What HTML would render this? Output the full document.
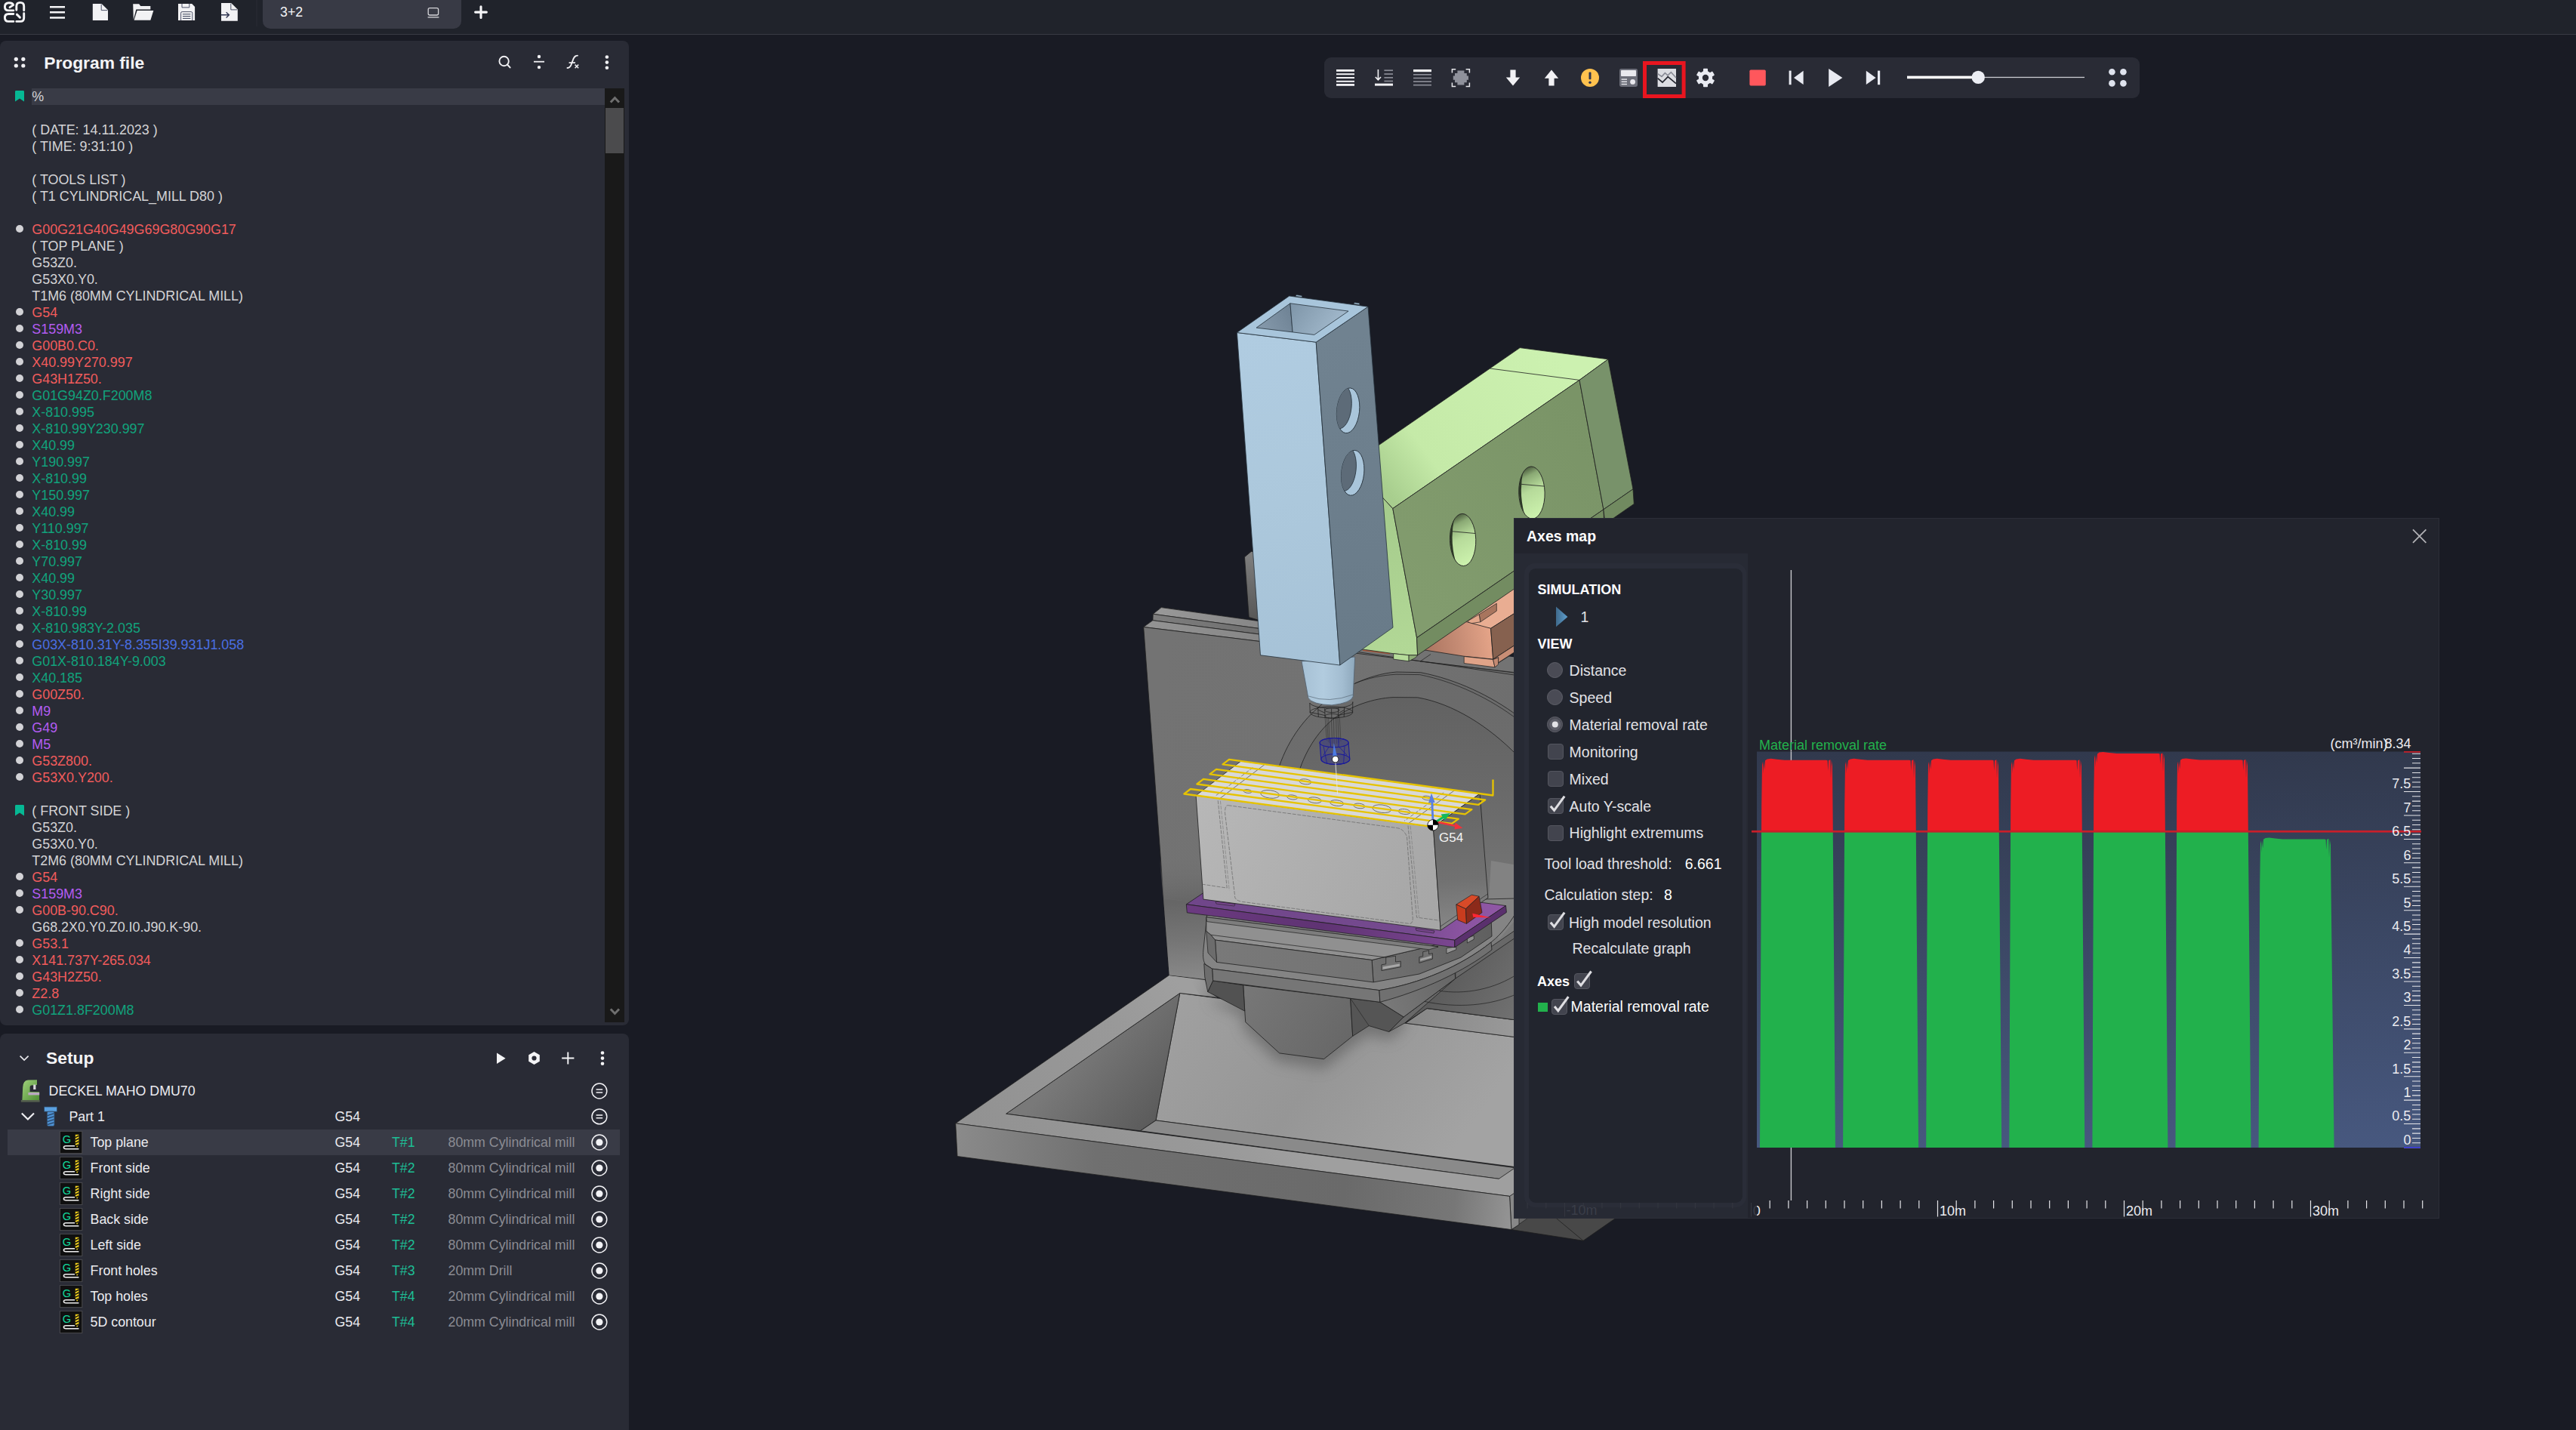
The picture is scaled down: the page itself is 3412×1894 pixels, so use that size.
<!DOCTYPE html>
<html><head><meta charset="utf-8"><title>CAM</title>
<style>
*{box-sizing:border-box;margin:0;padding:0}
html,body{width:3412px;height:1894px;overflow:hidden;background:#191b24}
body{position:relative;font-family:"Liberation Sans",sans-serif;color:#e6e6ea;font-size:18px}
.abs{position:absolute}
#topbar{left:0;top:0;width:3412px;height:45.6px;background:#20232b;border-bottom:1.2px solid #383a44}
#tab{left:348px;top:0;width:263px;height:38px;background:#383a45;border-radius:0 0 10px 10px}
#tab span{position:absolute;left:23px;top:6px;font-size:17.8px;color:#f2f2f5}
#prog{left:0;top:54px;width:833px;height:1304px;background:#292b35;border-radius:8px}
#setup{left:0;top:1369px;width:833px;height:540px;background:#292b35;border-radius:8px 8px 0 0}
.ptitle{position:absolute;font-weight:bold;font-size:22.8px;color:#f4f4f6;white-space:nowrap}
#code{left:0;top:117px;width:800px}
.ln{position:absolute;left:42.3px;height:22px;line-height:22px;font-size:17.9px;white-space:pre;color:#d4d4d6}
.ln.r{color:#f25c5c}.ln.g{color:#11a37c}.ln.p{color:#b35cf2}.ln.b{color:#4a6fe3}
.dot{position:absolute;left:21px;width:10px;height:10px;border-radius:50%;background:#d2d2d6}
#hl{left:42px;top:117px;width:759px;height:22px;background:#393b46}
#sbar{left:801px;top:117px;width:26px;height:1237px;background:#191919}
#sthumb{left:802px;top:143px;width:24px;height:60px;background:#4b4b4d}
.row{position:absolute;left:0;width:833px;height:34px;line-height:34px;font-size:17.8px;white-space:nowrap;color:#ececf0}
.row span{position:absolute;top:0}
.row .t{color:#1dbf95}.row .tool{color:#8b8c93}
#toolbar{left:1754px;top:76px;width:1080px;height:54px;background:#292b35;border-radius:9px}
#axes{left:2006px;top:687px;width:1224px;height:926px;background:#22242d;box-shadow:0 0 0 1px #2c2e38}
.lbl{position:absolute;font-size:19.5px;white-space:nowrap;color:#e2e2e6;line-height:24px}
.hd{position:absolute;font-size:18px;font-weight:bold;white-space:nowrap;color:#ffffff;line-height:24px}
.cb{position:absolute;width:21px;height:21px;border-radius:4px;background:#42444e;border:1.5px solid #54565f}
.rb{position:absolute;width:21px;height:21px;border-radius:50%;background:#4a4b55;border:1.5px solid #5f6069}
</style></head><body>
<div id="topbar" class="abs"></div>
<div id="tab" class="abs"><span>3+2</span></div>
<svg class="abs" style="left:0;top:0" width="700" height="46" viewBox="0 0 700 46">
 <!-- logo -->
 <g fill="none" stroke="#f4f4f6" stroke-width="2.9" stroke-linecap="round" stroke-linejoin="round">
  <path d="M17.8 13.9 L11.2 13.9 Q6.4 13.9 6.4 9 Q6.4 3.7 11.9 3.7 Q16.9 3.7 17.6 6.6 L13 9.6"/>
  <path d="M21.8 13.2 L21.8 8.2 Q21.8 3.4 26.8 3.4 Q31.7 3.4 31.7 8.2 L31.7 13.8"/>
  <path d="M17.8 18.5 L11.2 18.5 Q6.4 18.5 6.4 23.5 Q6.4 28.4 11.2 28.4 L17.8 28.4"/>
  <path d="M21.8 28.4 L27 28.4 Q31.7 28.4 31.7 23.7 L31.7 17.8"/>
  <path d="M22.4 19.1 L26.4 23.1"/>
 </g>
 <!-- hamburger -->
 <g fill="#f4f4f6"><rect x="66" y="8" width="20" height="2.5"/><rect x="66" y="15" width="20" height="2.5"/><rect x="66" y="22.2" width="20" height="2.5"/></g>
 <!-- new file -->
 <path d="M122.8 5 L134.6 5 L143 13.2 L143 27 L122.8 27 Z" fill="#f2f2f4"/>
 <path d="M134.2 5.6 L134.2 13.6 L142.4 13.6" fill="none" stroke="#3a4058" stroke-width="0.9"/>
 <!-- folder -->
 <path d="M176.2 5.3 L184.2 5.3 L186.2 8 L199.3 8 L199.3 12.6 L180.3 12.6 L176.8 26 Z" fill="#f2f2f4"/>
 <path d="M181.6 13.9 L203.3 13.9 L199.3 26.8 L177.6 26.8 Z" fill="#f2f2f4"/>
 <!-- save -->
 <path d="M236 5 L254.2 5 L258.1 9 L258.1 27 L236 27 Z" fill="#f2f2f4"/>
 <path d="M241 5 L241 9.9 L250.8 9.9 L250.8 5" fill="none" stroke="#3a4058" stroke-width="0.9"/>
 <path d="M239.6 27 L239.6 17.2 Q239.6 15.6 241.2 15.6 L253.2 15.6 Q254.8 15.6 254.8 17.2 L254.8 27" fill="none" stroke="#3a4058" stroke-width="0.9"/>
 <g stroke="#3a4058" stroke-width="1"><path d="M242 18.8 H252.4 M242 21.6 H252.4 M242 24.4 H252.4"/></g>
 <!-- export -->
 <path d="M293 4 L306.2 4 L314.8 12.5 L314.8 27.7 L293 27.7 Z" fill="#f2f2f4"/>
 <path d="M305.8 4.6 L305.8 12.9 L314.2 12.9" fill="none" stroke="#3a4058" stroke-width="0.9"/>
 <path d="M292.6 19.8 H303 M299.6 16.2 L303.4 19.8 L299.6 23.4" fill="none" stroke="#2e3450" stroke-width="1.4"/>
 <!-- separator -->
 <rect x="339.5" y="0" width="1" height="35" fill="#2a2c36"/>
 <!-- laptop -->
 <rect x="567.2" y="10.6" width="13.4" height="9.4" rx="2" fill="none" stroke="#d6d6da" stroke-width="1.3"/>
 <rect x="566.6" y="22.2" width="14.8" height="1.3" fill="#d6d6da"/>
 <!-- plus -->
 <path d="M629.6 16.1 H644.4 M637 8.7 V23.5" stroke="#f6f6f8" stroke-width="3.1" stroke-linecap="round"/>
</svg>
<div id="prog" class="abs"></div>
<div class="ptitle" style="left:58.2px;top:69px;line-height:28px">Program file</div>
<svg class="abs" style="left:0;top:54px" width="833" height="60" viewBox="0 54 833 60">
 <g fill="#f0f0f3"><circle cx="21.3" cy="78.3" r="2.6"/><circle cx="30.8" cy="78.3" r="2.6"/><circle cx="21.3" cy="87" r="2.6"/><circle cx="30.8" cy="87" r="2.6"/></g>
 <circle cx="667.6" cy="81" r="6.2" fill="none" stroke="#f0f0f3" stroke-width="1.9"/>
 <path d="M672.2 85.8 L675.6 89.4" stroke="#f0f0f3" stroke-width="2" stroke-linecap="round"/>
 <rect x="707" y="80.8" width="14" height="1.8" fill="#f0f0f3"/><circle cx="714" cy="75" r="2.2" fill="#f0f0f3"/><circle cx="714" cy="89.1" r="2.2" fill="#f0f0f3"/>
 <path d="M751.5 90 Q755.5 90 757.2 84 L759.6 77.6 Q761.4 73.6 765 73.6" fill="none" stroke="#f0f0f3" stroke-width="1.9" stroke-linecap="round"/>
 <path d="M753.6 83.1 H762" stroke="#f0f0f3" stroke-width="1.7"/>
 <path d="M761.6 85.6 L766.2 90.2 M766.2 85.6 L761.6 90.2" stroke="#f0f0f3" stroke-width="1.5"/>
 <g fill="#f0f0f3"><circle cx="803.9" cy="75.5" r="2.3"/><circle cx="803.9" cy="82.6" r="2.3"/><circle cx="803.9" cy="89.8" r="2.3"/></g>
</svg>
<div id="hl" class="abs"></div>
<div class="ln" style="top:117px">%</div>
<svg class="abs" style="left:20px;top:120px" width="13" height="15" viewBox="0 0 13 15"><path d="M1.4 0 H10.6 Q12 0 12 1.4 V14.4 L6 10.4 L0 14.4 V1.4 Q0 0 1.4 0 Z" fill="#06b894"/></svg>
<div class="ln" style="top:161px">( DATE: 14.11.2023 )</div>
<div class="ln" style="top:183px">( TIME: 9:31:10 )</div>
<div class="ln" style="top:227px">( TOOLS LIST )</div>
<div class="ln" style="top:249px">( T1 CYLINDRICAL_MILL D80 )</div>
<div class="ln r" style="top:293px">G00G21G40G49G69G80G90G17</div>
<div class="dot" style="top:297.7px"></div>
<div class="ln" style="top:315px">( TOP PLANE )</div>
<div class="ln" style="top:337px">G53Z0.</div>
<div class="ln" style="top:359px">G53X0.Y0.</div>
<div class="ln" style="top:381px">T1M6 (80MM CYLINDRICAL MILL)</div>
<div class="ln r" style="top:403px">G54</div>
<div class="dot" style="top:407.7px"></div>
<div class="ln p" style="top:425px">S159M3</div>
<div class="dot" style="top:429.7px"></div>
<div class="ln r" style="top:447px">G00B0.C0.</div>
<div class="dot" style="top:451.7px"></div>
<div class="ln r" style="top:469px">X40.99Y270.997</div>
<div class="dot" style="top:473.7px"></div>
<div class="ln r" style="top:491px">G43H1Z50.</div>
<div class="dot" style="top:495.7px"></div>
<div class="ln g" style="top:513px">G01G94Z0.F200M8</div>
<div class="dot" style="top:517.7px"></div>
<div class="ln g" style="top:535px">X-810.995</div>
<div class="dot" style="top:539.7px"></div>
<div class="ln g" style="top:557px">X-810.99Y230.997</div>
<div class="dot" style="top:561.7px"></div>
<div class="ln g" style="top:579px">X40.99</div>
<div class="dot" style="top:583.7px"></div>
<div class="ln g" style="top:601px">Y190.997</div>
<div class="dot" style="top:605.7px"></div>
<div class="ln g" style="top:623px">X-810.99</div>
<div class="dot" style="top:627.7px"></div>
<div class="ln g" style="top:645px">Y150.997</div>
<div class="dot" style="top:649.7px"></div>
<div class="ln g" style="top:667px">X40.99</div>
<div class="dot" style="top:671.7px"></div>
<div class="ln g" style="top:689px">Y110.997</div>
<div class="dot" style="top:693.7px"></div>
<div class="ln g" style="top:711px">X-810.99</div>
<div class="dot" style="top:715.7px"></div>
<div class="ln g" style="top:733px">Y70.997</div>
<div class="dot" style="top:737.7px"></div>
<div class="ln g" style="top:755px">X40.99</div>
<div class="dot" style="top:759.7px"></div>
<div class="ln g" style="top:777px">Y30.997</div>
<div class="dot" style="top:781.7px"></div>
<div class="ln g" style="top:799px">X-810.99</div>
<div class="dot" style="top:803.7px"></div>
<div class="ln g" style="top:821px">X-810.983Y-2.035</div>
<div class="dot" style="top:825.7px"></div>
<div class="ln b" style="top:843px">G03X-810.31Y-8.355I39.931J1.058</div>
<div class="dot" style="top:847.7px"></div>
<div class="ln g" style="top:865px">G01X-810.184Y-9.003</div>
<div class="dot" style="top:869.7px"></div>
<div class="ln g" style="top:887px">X40.185</div>
<div class="dot" style="top:891.7px"></div>
<div class="ln r" style="top:909px">G00Z50.</div>
<div class="dot" style="top:913.7px"></div>
<div class="ln p" style="top:931px">M9</div>
<div class="dot" style="top:935.7px"></div>
<div class="ln p" style="top:953px">G49</div>
<div class="dot" style="top:957.7px"></div>
<div class="ln p" style="top:975px">M5</div>
<div class="dot" style="top:979.7px"></div>
<div class="ln r" style="top:997px">G53Z800.</div>
<div class="dot" style="top:1001.7px"></div>
<div class="ln r" style="top:1019px">G53X0.Y200.</div>
<div class="dot" style="top:1023.7px"></div>
<div class="ln" style="top:1063px">( FRONT SIDE )</div>
<svg class="abs" style="left:20px;top:1066px" width="13" height="15" viewBox="0 0 13 15"><path d="M1.4 0 H10.6 Q12 0 12 1.4 V14.4 L6 10.4 L0 14.4 V1.4 Q0 0 1.4 0 Z" fill="#06b894"/></svg>
<div class="ln" style="top:1085px">G53Z0.</div>
<div class="ln" style="top:1107px">G53X0.Y0.</div>
<div class="ln" style="top:1129px">T2M6 (80MM CYLINDRICAL MILL)</div>
<div class="ln r" style="top:1151px">G54</div>
<div class="dot" style="top:1155.7px"></div>
<div class="ln p" style="top:1173px">S159M3</div>
<div class="dot" style="top:1177.7px"></div>
<div class="ln r" style="top:1195px">G00B-90.C90.</div>
<div class="dot" style="top:1199.7px"></div>
<div class="ln" style="top:1217px">G68.2X0.Y0.Z0.I0.J90.K-90.</div>
<div class="ln r" style="top:1239px">G53.1</div>
<div class="dot" style="top:1243.7px"></div>
<div class="ln r" style="top:1261px">X141.737Y-265.034</div>
<div class="dot" style="top:1265.7px"></div>
<div class="ln r" style="top:1283px">G43H2Z50.</div>
<div class="dot" style="top:1287.7px"></div>
<div class="ln r" style="top:1305px">Z2.8</div>
<div class="dot" style="top:1309.7px"></div>
<div class="ln g" style="top:1327px">G01Z1.8F200M8</div>
<div class="dot" style="top:1331.7px"></div>
<div id="sbar" class="abs"></div><div id="sthumb" class="abs"></div>
<svg class="abs" style="left:801px;top:117px" width="26" height="1237" viewBox="0 0 26 1237"><path d="M7.8 18.6 L13.4 12.6 L19 18.6" fill="none" stroke="#6f6f6f" stroke-width="3"/><path d="M7.8 1219.4 L13.4 1225.4 L19 1219.4" fill="none" stroke="#6f6f6f" stroke-width="3"/></svg>
<div id="setup" class="abs"></div>
<div class="ptitle" style="left:61px;top:1387px;line-height:28px">Setup</div>
<div class="abs" style="left:10px;top:1496px;width:811px;height:34px;background:#393b46"></div>
<svg class="abs" style="left:0;top:1369px" width="833" height="525" viewBox="0 1369 833 525">
<path d="M26.6 1398.6 L32.1 1404 L37.6 1398.6" fill="none" stroke="#e8e8ec" stroke-width="1.7"/>
<path d="M658 1394.6 L669.6 1401.8 L658 1409 Z" fill="#f4f4f6"/>
<polygon points="707.5,1393.1 714.8,1397.3 714.8,1405.7 707.5,1409.9 700.2,1405.7 700.2,1397.3" fill="#f4f4f6"/><circle cx="707.5" cy="1401.5" r="3.1" fill="#292b35"/>
<path d="M744.2 1401.5 H760.4 M752.3 1393.4 V1409.6" stroke="#f4f4f6" stroke-width="1.9"/>
<g fill="#f4f4f6"><circle cx="798" cy="1394.5" r="2.3"/><circle cx="798" cy="1401.6" r="2.3"/><circle cx="798" cy="1408.8" r="2.3"/></g>
<defs><linearGradient id="mg" x1="0" y1="0" x2="1" y2="1"><stop offset="0" stop-color="#9fd07c"/><stop offset="1" stop-color="#4f8f34"/></linearGradient></defs>
<path d="M29.4 1457 L30.2 1440 Q30.6 1431 37 1430.4 L49 1430.2 L49 1437 L41.6 1437.4 Q39.6 1437.6 39.6 1440.6 L39.6 1446 L52 1446 L52 1457 Z" fill="url(#mg)"/>
<rect x="44.2" y="1436.6" width="3.2" height="6.4" fill="#d8d8dc"/><rect x="37.4" y="1447" width="14.8" height="3.4" fill="#b9a8c0"/><rect x="27.8" y="1457" width="24.8" height="2.6" fill="#55604e"/>
<path d="M28.8 1474.4 L36.9 1482.6 L45 1474.4" fill="none" stroke="#f0f0f3" stroke-width="2.1"/>
<rect x="58.6" y="1466" width="16.8" height="6.2" fill="#5aa0e0" stroke="#2f4a66" stroke-width="0.8"/><rect x="62.4" y="1472.2" width="9.6" height="19.4" rx="2" fill="#4d8fd0" stroke="#2f4a66" stroke-width="0.8"/>
<path d="M63 1477.5 L71.4 1474.8 M63 1481.5 L71.4 1478.8 M63 1485.5 L71.4 1482.8 M63 1489.5 L71.4 1486.8" stroke="#1f3550" stroke-width="1.1"/>
<circle cx="793.9" cy="1445" r="9.9" fill="none" stroke="#f2f2f5" stroke-width="1.5"/><path d="M789.6 1443.1 H798.2 M789.6 1446.9 H798.2" stroke="#f2f2f5" stroke-width="1.5"/>
<circle cx="793.9" cy="1478.9" r="9.9" fill="none" stroke="#f2f2f5" stroke-width="1.5"/><path d="M789.6 1477.0 H798.2 M789.6 1480.8000000000002 H798.2" stroke="#f2f2f5" stroke-width="1.5"/>
<circle cx="793.9" cy="1513" r="9.9" fill="none" stroke="#f2f2f5" stroke-width="1.5"/><circle cx="793.9" cy="1513" r="4.6" fill="#f2f2f5"/>
<g transform="translate(79.4,1498.4)"><rect x="0" y="0" width="29.4" height="29.2" fill="#101010" stroke="#4a4a4e" stroke-width="1"/><text x="3.4" y="15.2" font-family="Liberation Sans" font-size="14.6" fill="#12dc9c">G</text><path d="M20.4 4.4 H25 V17 L22.7 21.6 L20.4 17 Z" fill="#f4d21c"/><path d="M20.4 8.2 L25 5.8 M20.4 12 L25 9.6 M20.4 15.8 L25 13.4 M21.4 19.2 L24.4 17.6" stroke="#101010" stroke-width="1.5"/><path d="M19.6 19.4 H8 Q5 19.4 5 21.4 Q5 23.4 8 23.4 H25" fill="none" stroke="#f0f0f0" stroke-width="1.5"/><path d="M4.6 23.9 H25" stroke="#f0f0f0" stroke-width="0" /></g>
<circle cx="793.9" cy="1547" r="9.9" fill="none" stroke="#f2f2f5" stroke-width="1.5"/><circle cx="793.9" cy="1547" r="4.6" fill="#f2f2f5"/>
<g transform="translate(79.4,1532.4)"><rect x="0" y="0" width="29.4" height="29.2" fill="#101010" stroke="#4a4a4e" stroke-width="1"/><text x="3.4" y="15.2" font-family="Liberation Sans" font-size="14.6" fill="#12dc9c">G</text><path d="M20.4 4.4 H25 V17 L22.7 21.6 L20.4 17 Z" fill="#f4d21c"/><path d="M20.4 8.2 L25 5.8 M20.4 12 L25 9.6 M20.4 15.8 L25 13.4 M21.4 19.2 L24.4 17.6" stroke="#101010" stroke-width="1.5"/><path d="M19.6 19.4 H8 Q5 19.4 5 21.4 Q5 23.4 8 23.4 H25" fill="none" stroke="#f0f0f0" stroke-width="1.5"/><path d="M4.6 23.9 H25" stroke="#f0f0f0" stroke-width="0" /></g>
<circle cx="793.9" cy="1581" r="9.9" fill="none" stroke="#f2f2f5" stroke-width="1.5"/><circle cx="793.9" cy="1581" r="4.6" fill="#f2f2f5"/>
<g transform="translate(79.4,1566.4)"><rect x="0" y="0" width="29.4" height="29.2" fill="#101010" stroke="#4a4a4e" stroke-width="1"/><text x="3.4" y="15.2" font-family="Liberation Sans" font-size="14.6" fill="#12dc9c">G</text><path d="M20.4 4.4 H25 V17 L22.7 21.6 L20.4 17 Z" fill="#f4d21c"/><path d="M20.4 8.2 L25 5.8 M20.4 12 L25 9.6 M20.4 15.8 L25 13.4 M21.4 19.2 L24.4 17.6" stroke="#101010" stroke-width="1.5"/><path d="M19.6 19.4 H8 Q5 19.4 5 21.4 Q5 23.4 8 23.4 H25" fill="none" stroke="#f0f0f0" stroke-width="1.5"/><path d="M4.6 23.9 H25" stroke="#f0f0f0" stroke-width="0" /></g>
<circle cx="793.9" cy="1615" r="9.9" fill="none" stroke="#f2f2f5" stroke-width="1.5"/><circle cx="793.9" cy="1615" r="4.6" fill="#f2f2f5"/>
<g transform="translate(79.4,1600.4)"><rect x="0" y="0" width="29.4" height="29.2" fill="#101010" stroke="#4a4a4e" stroke-width="1"/><text x="3.4" y="15.2" font-family="Liberation Sans" font-size="14.6" fill="#12dc9c">G</text><path d="M20.4 4.4 H25 V17 L22.7 21.6 L20.4 17 Z" fill="#f4d21c"/><path d="M20.4 8.2 L25 5.8 M20.4 12 L25 9.6 M20.4 15.8 L25 13.4 M21.4 19.2 L24.4 17.6" stroke="#101010" stroke-width="1.5"/><path d="M19.6 19.4 H8 Q5 19.4 5 21.4 Q5 23.4 8 23.4 H25" fill="none" stroke="#f0f0f0" stroke-width="1.5"/><path d="M4.6 23.9 H25" stroke="#f0f0f0" stroke-width="0" /></g>
<circle cx="793.9" cy="1649" r="9.9" fill="none" stroke="#f2f2f5" stroke-width="1.5"/><circle cx="793.9" cy="1649" r="4.6" fill="#f2f2f5"/>
<g transform="translate(79.4,1634.4)"><rect x="0" y="0" width="29.4" height="29.2" fill="#101010" stroke="#4a4a4e" stroke-width="1"/><text x="3.4" y="15.2" font-family="Liberation Sans" font-size="14.6" fill="#12dc9c">G</text><path d="M20.4 4.4 H25 V17 L22.7 21.6 L20.4 17 Z" fill="#f4d21c"/><path d="M20.4 8.2 L25 5.8 M20.4 12 L25 9.6 M20.4 15.8 L25 13.4 M21.4 19.2 L24.4 17.6" stroke="#101010" stroke-width="1.5"/><path d="M19.6 19.4 H8 Q5 19.4 5 21.4 Q5 23.4 8 23.4 H25" fill="none" stroke="#f0f0f0" stroke-width="1.5"/><path d="M4.6 23.9 H25" stroke="#f0f0f0" stroke-width="0" /></g>
<circle cx="793.9" cy="1683" r="9.9" fill="none" stroke="#f2f2f5" stroke-width="1.5"/><circle cx="793.9" cy="1683" r="4.6" fill="#f2f2f5"/>
<g transform="translate(79.4,1668.4)"><rect x="0" y="0" width="29.4" height="29.2" fill="#101010" stroke="#4a4a4e" stroke-width="1"/><text x="3.4" y="15.2" font-family="Liberation Sans" font-size="14.6" fill="#12dc9c">G</text><path d="M20.4 4.4 H25 V17 L22.7 21.6 L20.4 17 Z" fill="#f4d21c"/><path d="M20.4 8.2 L25 5.8 M20.4 12 L25 9.6 M20.4 15.8 L25 13.4 M21.4 19.2 L24.4 17.6" stroke="#101010" stroke-width="1.5"/><path d="M19.6 19.4 H8 Q5 19.4 5 21.4 Q5 23.4 8 23.4 H25" fill="none" stroke="#f0f0f0" stroke-width="1.5"/><path d="M4.6 23.9 H25" stroke="#f0f0f0" stroke-width="0" /></g>
<circle cx="793.9" cy="1717" r="9.9" fill="none" stroke="#f2f2f5" stroke-width="1.5"/><circle cx="793.9" cy="1717" r="4.6" fill="#f2f2f5"/>
<g transform="translate(79.4,1702.4)"><rect x="0" y="0" width="29.4" height="29.2" fill="#101010" stroke="#4a4a4e" stroke-width="1"/><text x="3.4" y="15.2" font-family="Liberation Sans" font-size="14.6" fill="#12dc9c">G</text><path d="M20.4 4.4 H25 V17 L22.7 21.6 L20.4 17 Z" fill="#f4d21c"/><path d="M20.4 8.2 L25 5.8 M20.4 12 L25 9.6 M20.4 15.8 L25 13.4 M21.4 19.2 L24.4 17.6" stroke="#101010" stroke-width="1.5"/><path d="M19.6 19.4 H8 Q5 19.4 5 21.4 Q5 23.4 8 23.4 H25" fill="none" stroke="#f0f0f0" stroke-width="1.5"/><path d="M4.6 23.9 H25" stroke="#f0f0f0" stroke-width="0" /></g>
<circle cx="793.9" cy="1751" r="9.9" fill="none" stroke="#f2f2f5" stroke-width="1.5"/><circle cx="793.9" cy="1751" r="4.6" fill="#f2f2f5"/>
<g transform="translate(79.4,1736.4)"><rect x="0" y="0" width="29.4" height="29.2" fill="#101010" stroke="#4a4a4e" stroke-width="1"/><text x="3.4" y="15.2" font-family="Liberation Sans" font-size="14.6" fill="#12dc9c">G</text><path d="M20.4 4.4 H25 V17 L22.7 21.6 L20.4 17 Z" fill="#f4d21c"/><path d="M20.4 8.2 L25 5.8 M20.4 12 L25 9.6 M20.4 15.8 L25 13.4 M21.4 19.2 L24.4 17.6" stroke="#101010" stroke-width="1.5"/><path d="M19.6 19.4 H8 Q5 19.4 5 21.4 Q5 23.4 8 23.4 H25" fill="none" stroke="#f0f0f0" stroke-width="1.5"/><path d="M4.6 23.9 H25" stroke="#f0f0f0" stroke-width="0" /></g>
</svg>
<div class="row" style="top:1428px"><span style="left:64.6px">DECKEL MAHO DMU70</span></div>
<div class="row" style="top:1462px"><span style="left:91.4px">Part 1</span><span style="left:443.5px">G54</span></div>
<div class="row" style="top:1496px"><span style="left:119.6px">Top plane</span><span style="left:443.5px">G54</span><span class="t" style="left:519px">T#1</span><span class="tool" style="left:593.5px">80mm Cylindrical mill</span></div>
<div class="row" style="top:1530px"><span style="left:119.6px">Front side</span><span style="left:443.5px">G54</span><span class="t" style="left:519px">T#2</span><span class="tool" style="left:593.5px">80mm Cylindrical mill</span></div>
<div class="row" style="top:1564px"><span style="left:119.6px">Right side</span><span style="left:443.5px">G54</span><span class="t" style="left:519px">T#2</span><span class="tool" style="left:593.5px">80mm Cylindrical mill</span></div>
<div class="row" style="top:1598px"><span style="left:119.6px">Back side</span><span style="left:443.5px">G54</span><span class="t" style="left:519px">T#2</span><span class="tool" style="left:593.5px">80mm Cylindrical mill</span></div>
<div class="row" style="top:1632px"><span style="left:119.6px">Left side</span><span style="left:443.5px">G54</span><span class="t" style="left:519px">T#2</span><span class="tool" style="left:593.5px">80mm Cylindrical mill</span></div>
<div class="row" style="top:1666px"><span style="left:119.6px">Front holes</span><span style="left:443.5px">G54</span><span class="t" style="left:519px">T#3</span><span class="tool" style="left:593.5px">20mm Drill</span></div>
<div class="row" style="top:1700px"><span style="left:119.6px">Top holes</span><span style="left:443.5px">G54</span><span class="t" style="left:519px">T#4</span><span class="tool" style="left:593.5px">20mm Cylindrical mill</span></div>
<div class="row" style="top:1734px"><span style="left:119.6px">5D contour</span><span style="left:443.5px">G54</span><span class="t" style="left:519px">T#4</span><span class="tool" style="left:593.5px">20mm Cylindrical mill</span></div>
<svg class="abs" style="left:1200px;top:340px" width="1020" height="1340" viewBox="1200 340 1020 1340"><defs><linearGradient id="g1" gradientUnits="userSpaceOnUse" x1="1560" y1="1320" x2="1900" y2="1560"><stop offset="0" stop-color="#a0a0a0"/><stop offset="0.5" stop-color="#969696"/><stop offset="1" stop-color="#a3a3a3"/></linearGradient><filter id="blur8" x="-30%" y="-30%" width="160%" height="160%"><feGaussianBlur stdDeviation="9"/></filter><linearGradient id="g2" gradientUnits="userSpaceOnUse" x1="1860" y1="1340" x2="2010" y2="1370"><stop offset="0" stop-color="#868686"/><stop offset="1" stop-color="#9a9a9a"/></linearGradient><linearGradient id="g3" gradientUnits="userSpaceOnUse" x1="1420" y1="1400" x2="1540" y2="1500"><stop offset="0" stop-color="#797979"/><stop offset="1" stop-color="#575757"/></linearGradient><linearGradient id="g4" gradientUnits="userSpaceOnUse" x1="1300" y1="1500" x2="1560" y2="1300"><stop offset="0" stop-color="#929292"/><stop offset="0.7" stop-color="#999999"/><stop offset="1" stop-color="#9f9f9f"/></linearGradient><linearGradient id="g5" gradientUnits="userSpaceOnUse" x1="1575" y1="1305" x2="1612" y2="1312"><stop offset="0" stop-color="#9d9d9d00"/><stop offset="1" stop-color="#7e7e7e"/></linearGradient><linearGradient id="g6" gradientUnits="userSpaceOnUse" x1="1268" y1="1510" x2="2000" y2="1600"><stop offset="0" stop-color="#8a8a8a"/><stop offset="0.25" stop-color="#707070"/><stop offset="0.7" stop-color="#6a6a6a"/><stop offset="0.9" stop-color="#777777"/><stop offset="1" stop-color="#939393"/></linearGradient><linearGradient id="g7" gradientUnits="userSpaceOnUse" x1="1520" y1="900" x2="2000" y2="1100"><stop offset="0" stop-color="#737373"/><stop offset="0.45" stop-color="#727272"/><stop offset="1" stop-color="#6d6d6d"/></linearGradient><linearGradient id="g8" gradientUnits="userSpaceOnUse" x1="1650" y1="735" x2="1660" y2="820"><stop offset="0" stop-color="#7e7e7e"/><stop offset="1" stop-color="#575757"/></linearGradient><linearGradient id="g9" gradientUnits="userSpaceOnUse" x1="1530" y1="810" x2="1700" y2="830"><stop offset="0" stop-color="#999999"/><stop offset="1" stop-color="#828282"/></linearGradient><linearGradient id="g10" gradientUnits="userSpaceOnUse" x1="1530" y1="815" x2="1700" y2="840"><stop offset="0" stop-color="#7d7d7d"/><stop offset="1" stop-color="#6c6c6c"/></linearGradient><linearGradient id="g11" gradientUnits="userSpaceOnUse" x1="1520" y1="825" x2="1700" y2="848"><stop offset="0" stop-color="#939393"/><stop offset="1" stop-color="#848484"/></linearGradient><linearGradient id="g12" gradientUnits="userSpaceOnUse" x1="1560" y1="1195" x2="1566" y2="1295"><stop offset="0" stop-color="#666666"/><stop offset="0.5" stop-color="#757575"/><stop offset="1" stop-color="#888888"/></linearGradient><linearGradient id="g13" gradientUnits="userSpaceOnUse" x1="1560" y1="1135" x2="1564" y2="1195"><stop offset="0" stop-color="#71717100"/><stop offset="1" stop-color="#666666"/></linearGradient><linearGradient id="g14" gradientUnits="userSpaceOnUse" x1="1850" y1="890" x2="1850" y2="1250"><stop offset="0" stop-color="#6a6a6a"/><stop offset="1" stop-color="#737373"/></linearGradient><linearGradient id="g15" gradientUnits="userSpaceOnUse" x1="1850" y1="925" x2="1850" y2="1240"><stop offset="0" stop-color="#626262"/><stop offset="0.5" stop-color="#6c6c6c"/><stop offset="1" stop-color="#7b7b7b"/></linearGradient><linearGradient id="g16" gradientUnits="userSpaceOnUse" x1="1900" y1="1290" x2="2000" y2="1350"><stop offset="0" stop-color="#595959"/><stop offset="1" stop-color="#707070"/></linearGradient><linearGradient id="g17" gradientUnits="userSpaceOnUse" x1="1650" y1="1310" x2="1790" y2="1400"><stop offset="0" stop-color="#777777"/><stop offset="1" stop-color="#666666"/></linearGradient><linearGradient id="g18" gradientUnits="userSpaceOnUse" x1="1830" y1="1320" x2="1925" y2="1290"><stop offset="0" stop-color="#797979"/><stop offset="1" stop-color="#666666"/></linearGradient><linearGradient id="g19" gradientUnits="userSpaceOnUse" x1="1820" y1="1290" x2="1970" y2="1230"><stop offset="0" stop-color="#717171"/><stop offset="1" stop-color="#606060"/></linearGradient><linearGradient id="g20" gradientUnits="userSpaceOnUse" x1="1610" y1="1250" x2="1818" y2="1295"><stop offset="0" stop-color="#797979"/><stop offset="1" stop-color="#737373"/></linearGradient><linearGradient id="g21" gradientUnits="userSpaceOnUse" x1="1600" y1="1200" x2="1990" y2="1225"><stop offset="0" stop-color="#70468a"/><stop offset="0.68" stop-color="#754a8f"/><stop offset="0.86" stop-color="#8a53a0"/><stop offset="1" stop-color="#9058a6"/></linearGradient><linearGradient id="g22" gradientUnits="userSpaceOnUse" x1="1572" y1="1205" x2="1926" y2="1250"><stop offset="0" stop-color="#6b3a80"/><stop offset="0.5" stop-color="#5f3373"/><stop offset="1" stop-color="#7a4690"/></linearGradient><linearGradient id="g23" gradientUnits="userSpaceOnUse" x1="1590" y1="1060" x2="1900" y2="1230"><stop offset="0" stop-color="#b7b7b7"/><stop offset="0.5" stop-color="#aeaeae"/><stop offset="1" stop-color="#a6a6a6"/></linearGradient><linearGradient id="g24" gradientUnits="userSpaceOnUse" x1="1930" y1="1080" x2="1940" y2="1220"><stop offset="0" stop-color="#686868"/><stop offset="0.6" stop-color="#717171"/><stop offset="1" stop-color="#848484"/></linearGradient><linearGradient id="g25" gradientUnits="userSpaceOnUse" x1="1885" y1="862" x2="1978" y2="846"><stop offset="0" stop-color="#a9735f"/><stop offset="0.5" stop-color="#c58b74"/><stop offset="1" stop-color="#e6a589"/></linearGradient><linearGradient id="g26" gradientUnits="userSpaceOnUse" x1="1820" y1="650" x2="1880" y2="860"><stop offset="0" stop-color="#a4ca8b"/><stop offset="1" stop-color="#b2d896"/></linearGradient><linearGradient id="g27" gradientUnits="userSpaceOnUse" x1="1830" y1="640" x2="2060" y2="470"><stop offset="0" stop-color="#a8ce8e"/><stop offset="0.25" stop-color="#c5eaa8"/><stop offset="1" stop-color="#ccf1b0"/></linearGradient><linearGradient id="g28" gradientUnits="userSpaceOnUse" x1="1850" y1="760" x2="2110" y2="560"><stop offset="0" stop-color="#829c6e"/><stop offset="1" stop-color="#7a9467"/></linearGradient><linearGradient id="g29" gradientUnits="userSpaceOnUse" x1="2012.9" y1="624.5" x2="2040.9" y2="682.5"><stop offset="0" stop-color="#4c5d3f"/><stop offset="0.16" stop-color="#8aa974"/><stop offset="0.45" stop-color="#b6da9a"/><stop offset="1" stop-color="#cdf3ae"/></linearGradient><linearGradient id="g30" gradientUnits="userSpaceOnUse" x1="1921.6" y1="687" x2="1949.6" y2="745"><stop offset="0" stop-color="#4c5d3f"/><stop offset="0.16" stop-color="#8aa974"/><stop offset="0.45" stop-color="#b6da9a"/><stop offset="1" stop-color="#cdf3ae"/></linearGradient><linearGradient id="g31" gradientUnits="userSpaceOnUse" x1="1724" y1="900" x2="1796" y2="900"><stop offset="0" stop-color="#a6c0d4"/><stop offset="0.4" stop-color="#b2ccdf"/><stop offset="0.75" stop-color="#a3bdd1"/><stop offset="1" stop-color="#8ca6ba"/></linearGradient><linearGradient id="g32" gradientUnits="userSpaceOnUse" x1="1640" y1="450" x2="1770" y2="880"><stop offset="0" stop-color="#b0cce1"/><stop offset="0.5" stop-color="#acc8dc"/><stop offset="1" stop-color="#a6c2d7"/></linearGradient><linearGradient id="g33" gradientUnits="userSpaceOnUse" x1="1760" y1="450" x2="1840" y2="850"><stop offset="0" stop-color="#708290"/><stop offset="1" stop-color="#697b89"/></linearGradient><linearGradient id="g34" gradientUnits="userSpaceOnUse" x1="1670" y1="432" x2="1712" y2="410"><stop offset="0" stop-color="#8498aa"/><stop offset="1" stop-color="#6e8294"/></linearGradient><linearGradient id="g35" gradientUnits="userSpaceOnUse" x1="1712" y1="405" x2="1760" y2="440"><stop offset="0" stop-color="#8097aa"/><stop offset="1" stop-color="#9fb6c9"/></linearGradient></defs>
<polygon points="1999.0,1600.0 2150.0,1600.0 2139.8,1613.6 2097.0,1643.3 2001.9,1628.6" fill="#484848" stroke="#202020" stroke-width="0.8" stroke-linejoin="round" />
<path d="M2061.4 1613.6 L2097.0 1643.3" fill="none" stroke="#202020" stroke-width="0.8" />
<polygon points="2001.9,1612.0 2025.5,1612.0 2002.2,1628.4" fill="#646464" stroke="#202020" stroke-width="0.7" stroke-linejoin="round" />
<polygon points="1562.8,1315.4 1861.7,1355.2 2010.0,1374.0 2010.0,1546.0 1531.0,1483.9" fill="url(#g1)" stroke="#202020" stroke-width="0.8" stroke-linejoin="round" />
<polygon points="1600,1318 1648,1340 1650,1358 1694,1400 1755,1410 1795,1378 1815,1364 1842,1372 1866,1350 1840,1330" fill="#666666" opacity="0.75" filter="url(#blur8)" transform="translate(-2,6)"/>
<polygon points="1890.2,1335.5 2010.0,1351.2 2010.0,1374.0 1861.7,1355.2" fill="url(#g2)" stroke="#202020" stroke-width="0.8" stroke-linejoin="round" />
<polygon points="1332.6,1475.2 1562.8,1315.4 1531.0,1483.9 1510.5,1497.8" fill="url(#g3)" stroke="#202020" stroke-width="0.8" stroke-linejoin="round" />
<polygon points="1510.5,1497.8 1531.0,1483.9 2005.5,1546.5 2010.0,1548.0 2010.0,1560.0 1985.3,1561.3" fill="#8a8a8a" stroke="#202020" stroke-width="0.8" stroke-linejoin="round" />
<polygon points="1265.7,1487.8 1548.7,1291.5 1595.7,1296.4 1600.6,1313.1 1612.3,1321.3 1562.8,1315.4 1332.6,1475.2 1985.3,1561.3 2012.0,1544.0 2012.0,1576.0 1999.6,1584.4" fill="url(#g4)" />
<polygon points="1575.0,1296.0 1595.7,1296.4 1600.6,1313.1 1612.3,1321.3 1590.0,1319.0" fill="url(#g5)" />
<path d="M1268.0 1531.5 L1265.7 1487.8 L1548.7 1291.5 L1595.7 1296.4" fill="none" stroke="#202020" stroke-width="0.8" />
<path d="M1612.3 1321.3 L1562.8 1315.4 L1332.6 1475.2 L1985.3 1561.3 L2012.0 1543.0" fill="none" stroke="#202020" stroke-width="0.8" />
<path d="M1265.7 1487.8 L1999.6 1584.4" fill="none" stroke="#202020" stroke-width="0.8" />
<polygon points="1999.6,1584.4 2012.0,1576.0 2012.0,1622.0 2001.9,1628.6" fill="#888888" stroke="#202020" stroke-width="0.8" stroke-linejoin="round" />
<polygon points="1265.7,1487.8 1999.6,1584.4 2001.9,1628.6 1268.0,1531.5" fill="url(#g6)" stroke="#202020" stroke-width="0.8" stroke-linejoin="round" />
<polygon points="1538.2,804.6 2010.0,871.0 2010.0,895.0 1514.7,830.5 1526.9,821.7 1527.3,813.3" fill="#737373" />
<polygon points="1648.5,737.8 1657.3,730.4 1690.0,734.0 1690.0,828.0 1654.2,817.5" fill="url(#g8)" stroke="#202020" stroke-width="0.8" stroke-linejoin="round" />
<polygon points="1538.2,804.6 1700.0,827.2 1700.0,836.8 1527.3,813.3" fill="url(#g9)" stroke="#202020" stroke-width="0.8" stroke-linejoin="round" />
<polygon points="1527.3,813.3 1700.0,836.8 1700.0,844.2 1526.9,821.7" fill="url(#g10)" stroke="#202020" stroke-width="0.8" stroke-linejoin="round" />
<polygon points="1526.9,821.7 1700.0,844.2 1700.0,853.4 1514.7,830.5" fill="url(#g11)" stroke="#202020" stroke-width="0.8" stroke-linejoin="round" />
<polygon points="1514.7,830.5 2010.0,891.6 2010.0,1351.2 1548.7,1291.5" fill="url(#g7)" stroke="#202020" stroke-width="0.8" stroke-linejoin="round" />
<polygon points="1541.0,1190.0 1600.0,1197.0 1600.0,1297.0 1548.7,1291.5" fill="url(#g12)" />
<polygon points="1535.0,1130.0 1600.0,1140.0 1600.0,1197.0 1541.0,1190.0" fill="url(#g13)" />
<path d="M1690 1030 C1700 990 1722 958 1745 938 C1770 915 1810 893 1850 890 L1881.7 890.7 C1930 900 1975 922 2010 948 L2010 1290 L1690 1290 Z" fill="url(#g14)" />
<path d="M1718 1030 C1728 995 1745 970 1765 953 C1790 934 1820 925 1845 923.6 L1877.5 923.8 C1925 932 1972 962 2010 1001 L2010 1290 L1718 1290 Z" fill="url(#g15)" />
<path d="M1690 1030 C1700 990 1722 958 1745 938 C1770 915 1810 893 1850 890 L1881.7 890.7 C1930 900 1975 922 2010 948" fill="none" stroke="#202020" stroke-width="0.8" />
<path d="M1795 905 C1812 898 1830 894.4 1849 893.2 L1880.6 893.6 C1928 903 1975 926 2010 953" fill="none" stroke="#202020" stroke-width="0.7" />
<path d="M1718 1030 C1728 995 1745 970 1765 953 C1790 934 1820 925 1845 923.6 L1877.5 923.8 C1925 932 1972 962 2010 1001" fill="none" stroke="#202020" stroke-width="0.8" />
<polygon points="1975.0,1140.0 2010.0,1146.0 2010.0,1215.0 1985.0,1245.0 1972.0,1190.0" fill="#828282" />
<polygon points="1927.8,1286.2 2010.0,1230.0 2010.0,1252.0 1861.2,1354.7 1839.6,1366.5 1859.2,1346.9 1927.8,1296.0" fill="#686868" stroke="#202020" stroke-width="0.8" stroke-linejoin="round" />
<polygon points="1927.8,1296.0 2010.0,1240.0 2010.0,1351.2 1890.2,1335.5 1861.2,1354.7" fill="url(#g16)" stroke="#202020" stroke-width="0.8" stroke-linejoin="round" />
<path d="M1905 1312 C1940 1318 1980 1310 2010 1290" fill="none" stroke="#202020" stroke-width="0.7" />
<path d="M1885 1326 C1930 1336 1975 1332 2010 1316" fill="none" stroke="#202020" stroke-width="0.7" />
<polygon points="1646.7,1304.8 1788.7,1322.4 1791.7,1372.3 1753.5,1402.7 1694.7,1394.9 1649.7,1353.7" fill="url(#g17)" stroke="#202020" stroke-width="0.8" stroke-linejoin="round" />
<polygon points="1606.6,1298.9 1646.7,1304.8 1648.7,1339.1 1599.7,1313.6" fill="#525252" stroke="#202020" stroke-width="0.8" stroke-linejoin="round" />
<polygon points="1788.7,1322.4 1827.9,1327.3 1859.2,1346.9 1839.6,1366.5 1813.2,1358.6 1791.7,1372.3" fill="#555555" stroke="#202020" stroke-width="0.8" stroke-linejoin="round" />
<path d="M1788.7 1322.4 L1813.2 1358.6" fill="none" stroke="#202020" stroke-width="0.6" />
<polygon points="1826.9,1311.6 1926.8,1286.2 1927.8,1296.0 1859.2,1346.9 1827.9,1327.3" fill="url(#g18)" stroke="#202020" stroke-width="0.8" stroke-linejoin="round" />
<path d="M1593.9 1258 C1593 1268 1594 1274 1596.8 1277.5 L1605.6 1283.2 L1826.9 1311.6 C1880 1303 1935 1280 1975 1248 C1990 1236 2000 1222 2006 1212 L2006 1190 L1600 1200 Z" fill="#848484" stroke="#202020" stroke-width="0.8" />
<polygon points="1605.6,1283.2 1826.9,1311.6 1827.9,1327.3 1606.6,1298.9" fill="#767676" stroke="#202020" stroke-width="0.8" stroke-linejoin="round" />
<path d="M1826.9 1311.6 C1880 1303 1935 1280 1975 1248 L1976 1258 C1940 1286 1885 1312 1827.9 1327.3 Z" fill="#707070" stroke="#202020" stroke-width="0.8" />
<polygon points="1594.8,1276.4 1605.6,1283.2 1606.6,1298.9 1599.7,1313.6 1595.8,1294.0" fill="#6d6d6d" stroke="#202020" stroke-width="0.8" stroke-linejoin="round" />
<polygon points="1817.1,1271.5 1896.4,1252.9 1975.0,1215.0 1976.0,1240.0 1935.0,1268.0 1880.0,1290.0 1819.1,1300.9" fill="url(#g19)" stroke="#202020" stroke-width="0.8" stroke-linejoin="round" />
<polygon points="1835.7,1268.2 1848.5,1266.2 1848.5,1274.0 1855.3,1273.1 1855.3,1280.7 1829.9,1285.6 1829.9,1277.8 1835.7,1276.8" fill="#737373" stroke="#202020" stroke-width="0.7" stroke-linejoin="round" />
<polygon points="1831.5,1280.6 1853.8,1276.4 1853.8,1279.4 1831.5,1283.8" fill="#a8a8a8" />
<polygon points="1884.7,1260.7 1892.5,1258.8 1892.5,1263.7 1897.4,1262.7 1897.4,1270.1 1879.8,1275.4 1879.8,1267.6 1884.7,1266.6" fill="#707070" stroke="#202020" stroke-width="0.7" stroke-linejoin="round" />
<polygon points="1881.2,1270.0 1896.2,1265.8 1896.2,1268.4 1881.2,1272.8" fill="#a4a4a4" />
<polygon points="1916.0,1255.8 1928.7,1253.9 1928.7,1257.8 1916.0,1263.0" fill="#979797" stroke="#202020" stroke-width="0.7" stroke-linejoin="round" />
<polygon points="1943.4,1242.1 1952.3,1239.2 1952.3,1244.1 1943.4,1249.0" fill="#909090" stroke="#202020" stroke-width="0.7" stroke-linejoin="round" />
<polygon points="1597.8,1214.7 1905.0,1254.0 1896.4,1252.9 1817.1,1271.5 1609.5,1245.0 1603.7,1238.2 1597.8,1233.3" fill="#909090" stroke="#202020" stroke-width="0.8" stroke-linejoin="round" />
<polygon points="1597.8,1214.7 1905.0,1254.0 1893.0,1257.8 1598.6,1220.6" fill="#7d7d7d" stroke="#202020" stroke-width="0.7" stroke-linejoin="round" />
<path d="M1603.7 1238.2 L1836.0 1268.0" fill="none" stroke="#202020" stroke-width="0.7" />
<polygon points="1609.5,1245.0 1817.1,1271.5 1819.1,1300.9 1611.5,1274.4" fill="url(#g20)" stroke="#202020" stroke-width="0.8" stroke-linejoin="round" />
<polygon points="1597.8,1233.3 1603.7,1238.2 1609.5,1245.0 1611.5,1274.4 1600.0,1262.0" fill="#6c6c6c" stroke="#202020" stroke-width="0.7" stroke-linejoin="round" />
<polygon points="1571.3,1197.8 1639.0,1152.2 1994.5,1199.6 1926.8,1245.2" fill="url(#g21)" stroke="#202020" stroke-width="0.8" stroke-linejoin="round" />
<polygon points="1571.3,1197.8 1926.8,1245.2 1926.8,1254.8 1572.3,1208.8" fill="url(#g22)" stroke="#202020" stroke-width="0.8" stroke-linejoin="round" />
<polygon points="1926.8,1245.2 1994.5,1199.6 1995.4,1208.4 1926.8,1254.8" fill="#5a306d" stroke="#202020" stroke-width="0.8" stroke-linejoin="round" />
<polygon points="1584.1,1053.6 1898.4,1095.1 1908.2,1232.2 1593.9,1191.1" fill="url(#g23)" stroke="#202020" stroke-width="0.8" stroke-linejoin="round" />
<polygon points="1898.4,1095.1 1960.1,1051.1 1970.9,1189.1 1908.2,1232.2" fill="url(#g24)" stroke="#202020" stroke-width="0.8" stroke-linejoin="round" />
<path d="M1908.0 1227.0 L1970.5 1184.0" fill="none" stroke="#202020" stroke-width="0.6" />
<polygon points="1610.0,1194.0 1636.0,1197.5 1635.0,1200.0 1611.0,1197.0" fill="#7a4690" stroke="#202020" stroke-width="0.6" stroke-linejoin="round" />
<polygon points="1875.0,1229.5 1900.0,1233.0 1899.0,1236.0 1876.0,1232.5" fill="#7a4690" stroke="#202020" stroke-width="0.6" stroke-linejoin="round" />
<path d="M1626.7 1066.7 L1850.5 1096.6 Q1859.5 1098.0 1863.5 1108.2 L1871.3 1216.5 Q1871.3 1225.1 1864.6 1223.1 L1645.5 1194.4 Q1634.5 1192.4 1635.5 1185.7 L1622.5 1076.4 Q1622.5 1066.1 1626.7 1066.7 Z" fill="none" stroke="#646464" stroke-width="0.7" stroke-dasharray="5 1.6"/>
<path d="M1613.2 1060.2 L1625.2 1176.1 L1592.5 1171.2" fill="none" stroke="#666" stroke-width="0.7" stroke-dasharray="5 1.6"/>
<path d="M1616.4 1060.6 L1628.2 1179.2" fill="none" stroke="#777" stroke-width="0.6" stroke-dasharray="5 1.6"/>
<path d="M1865.0 1093.4 L1876.5 1215.1 L1907.3 1219.2" fill="none" stroke="#666" stroke-width="0.7" stroke-dasharray="5 1.6"/>
<path d="M1868.1 1093.8 L1879.6 1214.9" fill="none" stroke="#777" stroke-width="0.6" stroke-dasharray="5 1.6"/>
<polygon points="1584.1,1053.6 1643.8,1008.0 1960.1,1051.1 1898.4,1095.1" fill="#d8d8d8" stroke="#202020" stroke-width="0.8" stroke-linejoin="round" />
<path d="M1675.4 1012.3 L1615.5 1057.8" fill="none" stroke="#444" stroke-width="0.7" />
<path d="M1659.4 1016.6 L1609.7 1054.3" fill="none" stroke="#444" stroke-width="0.6" stroke-dasharray="5 2"/>
<path d="M1926.9 1046.6 L1865.4 1090.7" fill="none" stroke="#444" stroke-width="0.7" />
<path d="M1912.2 1049.8 L1860.0 1087.4" fill="none" stroke="#444" stroke-width="0.6" stroke-dasharray="5 2"/>
<ellipse cx="1652.5" cy="1048.0" rx="5.5" ry="2.3" fill="none" stroke="#595959" stroke-width="0.8" transform="rotate(7 1652.5 1048.0)"/>
<ellipse cx="1682.1" cy="1051.9" rx="12.5" ry="5.2" fill="none" stroke="#595959" stroke-width="0.8" transform="rotate(7 1682.1 1051.9)"/>
<ellipse cx="1711.7" cy="1055.9" rx="7" ry="2.9" fill="none" stroke="#595959" stroke-width="0.8" transform="rotate(7 1711.7 1055.9)"/>
<ellipse cx="1741.3" cy="1059.8" rx="9" ry="3.8" fill="none" stroke="#595959" stroke-width="0.8" transform="rotate(7 1741.3 1059.8)"/>
<ellipse cx="1770.7" cy="1063.6" rx="9" ry="3.8" fill="none" stroke="#595959" stroke-width="0.8" transform="rotate(7 1770.7 1063.6)"/>
<ellipse cx="1800.4" cy="1067.4" rx="7.6" ry="3.2" fill="none" stroke="#595959" stroke-width="0.8" transform="rotate(7 1800.4 1067.4)"/>
<ellipse cx="1830.3" cy="1071.2" rx="12.5" ry="5.2" fill="none" stroke="#595959" stroke-width="0.8" transform="rotate(7 1830.3 1071.2)"/>
<ellipse cx="1860.1" cy="1075.0" rx="8" ry="3.4" fill="none" stroke="#595959" stroke-width="0.8" transform="rotate(7 1860.1 1075.0)"/>
<ellipse cx="1728.9" cy="1035.3" rx="8" ry="3.4" fill="none" stroke="#595959" stroke-width="0.8" transform="rotate(7 1728.9 1035.3)"/>
<ellipse cx="1890.1" cy="1057.0" rx="6.4" ry="2.7" fill="none" stroke="#595959" stroke-width="0.8" transform="rotate(7 1890.1 1057.0)"/>
<path d="M1977.5 1032.5 L1977.5 1053.5 L1628.0 1005.8 L1619.5 1012.4 L1967.1 1059.5 L1958.3 1065.8 L1611.0 1018.9 L1602.4 1025.4 L1949.4 1072.1 L1940.6 1078.4 L1593.9 1031.9 L1585.4 1038.5 L1931.8 1084.6 L1922.9 1090.9 L1576.9 1045.0 L1568.4 1051.5 L1898.4 1095.1" fill="none" stroke="#e6c300" stroke-width="2.3" stroke-linejoin="round"/>
<polygon points="1940.0,826.9 1974.6,832.3 2010.0,809.8 2010.0,774.0 1940.0,821.0" fill="#e9ad92" stroke="#202020" stroke-width="0.7" stroke-linejoin="round" />
<polygon points="1959.2,813.8 1982.3,799.2 1982.3,809.2 1960.8,823.8" fill="#a8755e" stroke="#202020" stroke-width="0.7" stroke-linejoin="round" />
<polygon points="1944.0,822.6 1959.2,813.8 1960.8,823.8 1947.4,825.9" fill="#e4a78b" stroke="#202020" stroke-width="0.7" stroke-linejoin="round" />
<polygon points="1884.0,860.5 1940.0,823.0 1974.6,832.3 1977.7,873.1 1939.2,869.2" fill="url(#g25)" stroke="#202020" stroke-width="0.8" stroke-linejoin="round" />
<polygon points="1974.6,832.3 2010.0,809.8 2010.0,852.0 1977.7,873.1" fill="#86614f" stroke="#202020" stroke-width="0.8" stroke-linejoin="round" />
<polygon points="1977.7,873.3 2010.0,852.2 2010.0,861.0 1984.6,877.7 1984.6,870.8" fill="#c98e75" stroke="#202020" stroke-width="0.7" stroke-linejoin="round" />
<polygon points="1939.2,869.5 1977.7,873.5 1980.0,883.8 1939.2,878.5" fill="#e0a388" stroke="#202020" stroke-width="0.7" stroke-linejoin="round" />
<polygon points="1977.7,873.5 1984.6,870.8 1984.6,880.0 1980.0,883.8" fill="#c48a72" stroke="#202020" stroke-width="0.7" stroke-linejoin="round" />
<path d="M1984.6 878.0 L2010.0 862.0" fill="none" stroke="#202020" stroke-width="0.7" />
<polygon points="1805.0,860.4 1841.0,864.6 1841.0,866.4 1805.0,862.0" fill="#a8583a" />
<path d="M1794.6 863.0 L2010.0 894.6" fill="none" stroke="#202020" stroke-width="0.8" />
<path d="M1881.0 876.0 L1895.0 866.5" fill="none" stroke="#202020" stroke-width="0.7" />
<path d="M1881.0 876.0 L2010.0 891.0" fill="none" stroke="#202020" stroke-width="0.6" />
<polygon points="1790.0,614.0 1844.8,673.5 1876.6,844.7 1877.6,867.8 1866.1,867.8 1845.7,865.7 1808.4,860.5 1790.0,858.0" fill="url(#g26)" stroke="#202020" stroke-width="0.8" stroke-linejoin="round" />
<polygon points="1845.7,865.7 1866.1,867.8 1866.1,875.8 1845.7,873.1" fill="#b6dc9a" stroke="#202020" stroke-width="0.7" stroke-linejoin="round" />
<polygon points="1866.1,867.8 1877.6,867.8 1875.0,871.0 1866.1,875.8" fill="#8fae78" stroke="#202020" stroke-width="0.7" stroke-linejoin="round" />
<polygon points="1790.0,614.6 2013.2,460.6 2130.0,475.8 2092.0,503.4 1844.8,673.5" fill="url(#g27)" stroke="#202020" stroke-width="0.8" stroke-linejoin="round" />
<path d="M1973.3 488.0 L2092.0 503.4" fill="none" stroke="#202020" stroke-width="0.8" />
<polygon points="1844.8,673.5 2092.0,503.4 2123.9,674.8 1876.6,844.7" fill="url(#g28)" stroke="#202020" stroke-width="0.8" stroke-linejoin="round" />
<polygon points="1876.6,844.7 2123.9,674.8 2125.0,698.0 1877.6,867.8" fill="#738c61" stroke="#202020" stroke-width="0.8" stroke-linejoin="round" />
<polygon points="2092.0,503.4 2130.0,475.8 2163.0,647.8 2123.9,674.8" fill="#78926a" stroke="#202020" stroke-width="0.8" stroke-linejoin="round" />
<polygon points="2123.9,674.8 2163.0,647.8 2164.3,667.4 2126.0,694.0" fill="#718a60" stroke="#202020" stroke-width="0.8" stroke-linejoin="round" />
<g transform="rotate(-1.5 2028.9 652.5)"><ellipse cx="2028.9" cy="652.5" rx="17.2" ry="34.6" fill="url(#g29)" stroke="#202020" stroke-width="0.9"/><clipPath id="gh1"><ellipse cx="2028.9" cy="652.5" rx="17.2" ry="34.6"/></clipPath><path d="M2011.3000000000002 640.5 L2045.9 644.5" stroke="#202020" stroke-width="0.8" clip-path="url(#gh1)"/><path d="M2016.9 622.5 Q2009.9 652.5 2016.9 680.5" fill="none" stroke="#2c3726" stroke-width="3" clip-path="url(#gh1)"/></g>
<g transform="rotate(-1.5 1937.6 715)"><ellipse cx="1937.6" cy="715" rx="17.2" ry="34.6" fill="url(#g30)" stroke="#202020" stroke-width="0.9"/><clipPath id="gh2"><ellipse cx="1937.6" cy="715" rx="17.2" ry="34.6"/></clipPath><path d="M1920.0 703 L1954.6 707" stroke="#202020" stroke-width="0.8" clip-path="url(#gh2)"/><path d="M1925.6 685 Q1918.6 715 1925.6 743" fill="none" stroke="#2c3726" stroke-width="3" clip-path="url(#gh2)"/></g>
<path d="M1724 875.8 L1794.7 870 L1792.2 922.4 Q1790 931 1764 933.9 Q1738 933 1732.9 924.5 Z" fill="url(#g31)" stroke="#51606e" stroke-width="0.8" />
<path d="M1733.2 922 Q1760 932 1792.2 920" fill="none" stroke="#5a6a78" stroke-width="0.7" />
<g fill="none" stroke="#141414" stroke-width="0.8" opacity="0.82"><path d="M1734.8 931 A28.5 7.6 0 0 0 1791.8 929.6"/><ellipse cx="1763.4" cy="943.4" rx="28.3" ry="7.6"/><path d="M1734.8 931 L1735.2 943.4 M1791.8 929.6 L1791.6 943.4 M1745.6 937 L1746.4 949.6 M1780.6 936.4 L1780.2 949.8 M1754.6 938.4 L1755.2 950.8 M1772.6 938 L1772.4 950.8 M1763.6 938.8 L1763.8 951"/><path d="M1735.2 943.4 L1755.4 947.6 M1791.6 943.4 L1773.6 947.2 M1745.8 940 L1755 944.4 M1781 940 L1773.6 944.2"/><ellipse cx="1764.4" cy="940.6" rx="9.6" ry="3"/><ellipse cx="1764.6" cy="948.4" rx="9.6" ry="3"/></g>
<g fill="none" stroke="#222" stroke-width="0.8" opacity="0.55"><path d="M1755 949 L1757.4 981 M1757.4 950 L1759.4 983 M1759.6 950 L1761.2 984 M1763.4 951 L1764.6 985 M1766.4 951 L1767.2 985 M1769.6 951 L1770.6 985 M1772 950.6 L1773.4 984 M1774.2 949.6 L1776 982"/></g>
<g stroke="#1a1a9c" stroke-width="1.1" fill="rgba(58,58,128,0.42)"><path d="M1748.1 983.7 L1749.8 1005.5 A19 7 0 0 0 1787.8 1005.5 L1786.1 983.7 A19 6.2 0 0 0 1748.1 983.7 Z"/><ellipse cx="1767.1" cy="983.7" rx="19" ry="6.2" fill="rgba(58,58,128,0.25)"/><ellipse cx="1768.8" cy="1005.5" rx="19" ry="7" fill="rgba(58,58,128,0.22)"/><path d="M1753 988 L1757.6 1011.4 M1781 988 L1779.6 1011.4 M1760 989.6 L1753 1000 M1774 989.6 L1784 1000 M1761.6 978 L1762.8 989.8 M1773 978 L1773 989.8" fill="none" stroke-width="0.8"/></g>
<path d="M1766.7 984 L1771 1001.6 L1765.2 1001.6 Z" fill="#4c7ae2" />
<path d="M1768.9 1010 L1771.6 1052" fill="none" stroke="#e8e8e8" stroke-width="1.1" opacity="0.8"/>
<circle cx="1768.7" cy="1005.6" r="4.3" fill="#ffffff" stroke="#111" stroke-width="0.9"/>
<polygon points="1638.4,440.5 1743.2,453.2 1774.8,881.0 1669.5,867.8" fill="url(#g32)" stroke="#26323c" stroke-width="0.8" stroke-linejoin="round" />
<polygon points="1743.2,453.2 1812.0,406.2 1845.0,831.1 1774.8,881.0" fill="url(#g33)" stroke="#26323c" stroke-width="0.8" stroke-linejoin="round" />
<polygon points="1638.4,440.5 1707.7,392.0 1812.0,406.2 1743.2,453.2" fill="#a8c5db" stroke="#26323c" stroke-width="0.8" stroke-linejoin="round" />
<polygon points="1716.0,392.4 1725.0,393.6 1724.0,391.6 1717.0,390.6" fill="#a8c5db" stroke="#26323c" stroke-width="0.6" stroke-linejoin="round" />
<polygon points="1793.0,402.6 1801.0,403.8 1800.4,401.6 1794.0,400.8" fill="#a8c5db" stroke="#26323c" stroke-width="0.6" stroke-linejoin="round" />
<polygon points="1664.1,434.1 1708.9,401.8 1712.1,439.9" fill="url(#g34)" stroke="#26323c" stroke-width="0.8" stroke-linejoin="round" />
<polygon points="1708.9,401.8 1786.0,412.1 1740.8,443.4 1712.1,439.9" fill="url(#g35)" stroke="#26323c" stroke-width="0.8" stroke-linejoin="round" />
<g transform="rotate(6 1785.6 543.8)"><ellipse cx="1785.6" cy="543.8" rx="15" ry="30" fill="#a9c5da" stroke="#26323c" stroke-width="0.9"/><clipPath id="bh1"><ellipse cx="1785.6" cy="543.8" rx="15" ry="30"/></clipPath><ellipse cx="1776.1" cy="539.8" rx="13.5" ry="29" fill="#5d6b78" stroke="#26323c" stroke-width="0.8" clip-path="url(#bh1)"/></g>
<g transform="rotate(6 1791.7 626.3)"><ellipse cx="1791.7" cy="626.3" rx="15" ry="30" fill="#a9c5da" stroke="#26323c" stroke-width="0.9"/><clipPath id="bh2"><ellipse cx="1791.7" cy="626.3" rx="15" ry="30"/></clipPath><ellipse cx="1782.2" cy="622.3" rx="13.5" ry="29" fill="#5d6b78" stroke="#26323c" stroke-width="0.8" clip-path="url(#bh2)"/></g>
<path d="M1896.6 1088 L1895.4 1063 L1892 1063.4 L1896 1050.6 L1900.6 1063 L1898.2 1063 L1899.4 1088 Z" fill="#5a7fe0"/>
<path d="M1903 1090 L1927 1095 L1926.4 1098.6 L1937.4 1096.8 L1927.6 1089.6 L1927.2 1092.4 L1904 1087.6 Z" fill="#f0323c"/>
<path d="M1902 1090 L1912 1084 L1913.6 1086.8 L1921 1077 L1908.6 1078.6 L1910.4 1081.4 L1900.6 1087.4 Z" fill="#12b85a"/>
<circle cx="1898" cy="1092.8" r="7.2" fill="#ffffff" stroke="#000" stroke-width="0.8"/>
<path d="M1898 1092.8 L1898 1085.6 A7.2 7.2 0 0 1 1905.2 1092.8 Z M1898 1092.8 L1898 1100.0 A7.2 7.2 0 0 1 1890.8 1092.8 Z" fill="#000"/>
<text x="1906" y="1115.2" font-family="Liberation Sans" font-size="17" fill="#f4f4f4">G54</text>
<polygon points="1928.8,1198.0 1949.3,1185.2 1959.1,1187.2 1941.5,1203.8" fill="#d94a28" stroke="#202020" stroke-width="0.7" stroke-linejoin="round" />
<polygon points="1928.8,1198.0 1941.5,1203.8 1942.5,1223.4 1930.7,1218.5" fill="#c83c1e" stroke="#202020" stroke-width="0.7" stroke-linejoin="round" />
<polygon points="1941.5,1203.8 1959.1,1187.2 1963.0,1208.7 1942.5,1223.4" fill="#8c2a1a" stroke="#202020" stroke-width="0.7" stroke-linejoin="round" />
<polygon points="1950.3,1209.7 1974.8,1215.6 1951.3,1214.8" fill="#ff2634" />
</svg>
<div id="toolbar" class="abs"></div>
<svg class="abs" style="left:1754px;top:76px" width="1080" height="54" viewBox="1754 76 1080 54">
 <!-- icon1 -->
 <g fill="#f2f2f5"><rect x="1770" y="92" width="24" height="2.8"/><rect x="1770" y="97.2" width="24" height="2"/><rect x="1770" y="102" width="24" height="2"/><rect x="1770" y="106.8" width="24" height="2"/><rect x="1770" y="111" width="24" height="2.8"/></g>
 <!-- icon2 -->
 <path d="M1825.4 92 V105.4 M1821.8 102 L1825.4 105.8 L1829 102" fill="none" stroke="#f2f2f5" stroke-width="1.6"/>
 <g fill="#8a8c96"><rect x="1833.4" y="92.4" width="11.6" height="1.7"/><rect x="1833.4" y="97.2" width="11.6" height="1.7"/><rect x="1833.4" y="102" width="11.6" height="1.7"/><rect x="1833.4" y="106.6" width="11.6" height="1.7"/></g>
 <rect x="1821" y="110.6" width="24" height="3" fill="#f2f2f5"/>
 <!-- icon3 -->
 <rect x="1872" y="92" width="24" height="3.2" fill="#f2f2f5"/>
 <g fill="#8a8c96"><rect x="1872" y="98" width="24" height="1.7"/><rect x="1872" y="102.6" width="24" height="1.7"/><rect x="1872" y="107.2" width="24" height="1.7"/><rect x="1872" y="111.8" width="24" height="1.7"/></g>
 <!-- icon4 -->
 <g fill="none" stroke="#e8e8ec" stroke-width="1.5"><path d="M1923.4 96.6 V91.8 H1928.2 M1941.6 91.8 H1946.4 V96.6 M1946.4 109.6 V114.4 H1941.6 M1928.2 114.4 H1923.4 V109.6"/></g>
 <path d="M1930.4 93.6 H1939.4 V97 H1942.8 V100.4 H1945 V105.8 H1942.8 V109.2 H1939.4 V112.6 H1930.4 V109.2 H1927 V105.8 H1924.8 V100.4 H1927 V97 H1930.4 Z" fill="#8f919b"/>
 <!-- down arrow -->
 <path d="M2000.4 92.6 H2007.6 V102.4 H2013.2 L2004 113.6 L1994.8 102.4 H2000.4 Z" fill="#f2f2f5"/>
 <!-- up arrow -->
 <path d="M2051.4 113.6 H2058.6 V103.8 H2064.2 L2055 92.6 L2045.8 103.8 H2051.4 Z" fill="#f2f2f5"/>
 <!-- warn -->
 <circle cx="2106" cy="103" r="12" fill="#ffc24f"/><rect x="2104.5" y="95.6" width="3" height="9.6" rx="1" fill="#2e3450"/><circle cx="2106" cy="109.2" r="1.7" fill="#2e3450"/>
 <!-- calc -->
 <rect x="2145" y="91" width="24" height="24" rx="2.4" fill="#6c6e79"/><rect x="2147" y="93" width="20" height="8" rx="0.8" fill="#e9e9ee"/>
 <g fill="#e9e9ee"><rect x="2147.6" y="104.4" width="7.4" height="1.4"/><rect x="2147.6" y="107.6" width="7.4" height="1.4"/><rect x="2147.6" y="110.8" width="7.4" height="1.4"/></g><circle cx="2162.6" cy="108.4" r="3.4" fill="#e9e9ee"/>
 <!-- red highlight box -->
 <rect x="2178.5" y="83.5" width="51.6" height="44" fill="none" stroke="#e9151f" stroke-width="5"/>
 <!-- chart icon -->
 <rect x="2195.6" y="91" width="24.4" height="24" fill="#dcdde2"/>
 <path d="M2195.6 97.6 L2201 101.4 L2205.4 96.6 L2209 99.8 L2213.4 95.6 L2220 103" fill="none" stroke="#8a8c96" stroke-width="1.6"/>
 <path d="M2195.6 103.6 L2202 109 L2209.2 101.6 L2220 110.6" fill="none" stroke="#23252e" stroke-width="1.7"/>
 <!-- gear -->
 <g transform="translate(2259,103)" fill="#e9ebf2">
  <g><rect x="-3" y="-12.2" width="6" height="24.4" rx="0.8"/><rect x="-3" y="-12.2" width="6" height="24.4" rx="0.8" transform="rotate(60)"/><rect x="-3" y="-12.2" width="6" height="24.4" rx="0.8" transform="rotate(120)"/></g>
  <circle r="9.2"/><circle r="4.2" fill="#292b35"/>
 </g>
 <!-- stop -->
 <rect x="2317.4" y="92.6" width="21.4" height="20.8" rx="1.6" fill="#ff575c"/>
 <!-- prev -->
 <rect x="2369.6" y="93.6" width="3" height="18.6" fill="#e9ebf2"/><path d="M2388.6 93.8 V112 L2376 102.9 Z" fill="#e9ebf2"/>
 <!-- play -->
 <path d="M2422.2 91 V115 L2440.4 103 Z" fill="#e9ebf2"/>
 <!-- next -->
 <path d="M2471.8 93.8 V112 L2484.6 102.9 Z" fill="#e9ebf2"/><rect x="2487" y="93.6" width="3.2" height="18.6" fill="#e9ebf2"/>
 <!-- slider -->
 <rect x="2526" y="100.6" width="94" height="3.6" fill="#ffffff"/><rect x="2620" y="101.8" width="141" height="1.3" fill="#c9cad0"/><circle cx="2620.2" cy="102.4" r="8.7" fill="#eceef4"/>
 <!-- dots -->
 <g fill="#dfe3ee"><circle cx="2797.4" cy="95.2" r="4.3"/><circle cx="2812.4" cy="95.2" r="4.3"/><circle cx="2797.4" cy="110.4" r="4.3"/><circle cx="2812.4" cy="110.4" r="4.3"/></g>
</svg>
<div id="axes" class="abs"></div>
<div class="abs" style="left:2006px;top:733px;width:309px;height:880px;background:#272a34"></div>
<div class="abs" style="left:2018.6px;top:746px;width:294.6px;height:853.4px;background:#2a2d38;border-radius:14px"></div>
<div class="abs" style="left:2024.8px;top:752.6px;width:282.8px;height:840.6px;background:#22252e;border-radius:9px"></div>
<div class="abs" style="left:2022px;top:698px;font-size:19.5px;font-weight:bold;color:#fff;line-height:24px;white-space:nowrap">Axes map</div>
<div class="hd" style="left:2036.6px;top:769.0px;">SIMULATION</div>
<div class="lbl" style="left:2093.6px;top:804.5px;">1</div>
<div class="hd" style="left:2036.6px;top:841.1999999999999px;">VIEW</div>
<div class="lbl" style="left:2078.6px;top:875.8px;">Distance</div>
<div class="rb" style="left:2049.3px;top:877.3px"></div>
<div class="lbl" style="left:2078.6px;top:911.6px;">Speed</div>
<div class="rb" style="left:2049.3px;top:913.1px"></div>
<div class="lbl" style="left:2078.6px;top:947.6px;">Material removal rate</div>
<div class="rb" style="left:2049.3px;top:949.1px"></div>
<div class="lbl" style="left:2078.6px;top:983.6px;">Monitoring</div>
<div class="cb" style="left:2049.6px;top:985.1px"></div>
<div class="lbl" style="left:2078.6px;top:1019.5999999999999px;">Mixed</div>
<div class="cb" style="left:2049.6px;top:1021.0999999999999px"></div>
<div class="lbl" style="left:2078.6px;top:1055.6px;">Auto Y-scale</div>
<div class="cb" style="left:2049.6px;top:1057.1px"></div>
<div class="lbl" style="left:2078.6px;top:1091.4px;">Highlight extremums</div>
<div class="cb" style="left:2049.6px;top:1092.9px"></div>
<div class="lbl" style="left:2045.5px;top:1132.4px;">Tool load threshold:</div>
<div class="lbl" style="left:2231.7px;top:1132.4px;color:#fff">6.661</div>
<div class="lbl" style="left:2045.5px;top:1173.2px;">Calculation step:</div>
<div class="lbl" style="left:2204px;top:1173.2px;color:#fff">8</div>
<div class="cb" style="left:2049.6px;top:1211.1px"></div>
<div class="lbl" style="left:2078px;top:1209.8px;">High model resolution</div>
<div class="lbl" style="left:2082.5px;top:1244.2px;">Recalculate graph</div>
<div class="hd" style="left:2036px;top:1288.0px;">Axes</div>
<div class="cb" style="left:2085px;top:1288.9px"></div>
<div class="abs" style="left:2036.8px;top:1327.6px;width:13.4px;height:12.6px;background:#22b14c"></div>
<div class="cb" style="left:2054.8px;top:1322.5px"></div>
<div class="lbl" style="left:2080.6px;top:1321.2px;color:#fff">Material removal rate</div>
<div class="lbl" style="left:2074.6px;top:1591.4px;color:#3a3d48;font-size:18px">-10m</div>
<svg class="abs" style="left:2006px;top:686px" width="1225" height="927" viewBox="2006 686 1225 927">
<defs><linearGradient id="cg" x1="0" y1="0" x2="0" y2="1"><stop offset="0" stop-color="#31394d"/><stop offset="1" stop-color="#47587f"/></linearGradient><linearGradient id="tg" x1="0" y1="0" x2="1" y2="0"><stop offset="0" stop-color="#3f6a8c"/><stop offset="1" stop-color="#5fa0cf"/></linearGradient></defs>
<path d="M2061 803.6 L2076.4 817 L2061 830.2 Z" fill="url(#tg)"/>
<circle cx="2059.8" cy="959.6" r="7.6" fill="#5e5f69"/><circle cx="2059.8" cy="959.6" r="4" fill="#e4e4e8"/>
<path d="M2053.7999999999997 1067.6999999999998 L2058.6 1073.3 L2072.2 1054.6999999999998" fill="none" stroke="#dedee2" stroke-width="3.1" stroke-linejoin="miter"/>
<path d="M2053.7999999999997 1221.6999999999998 L2058.6 1227.3 L2072.2 1208.6999999999998" fill="none" stroke="#dedee2" stroke-width="3.1" stroke-linejoin="miter"/>
<path d="M2089.2 1299.5 L2094 1305.1000000000001 L2107.6 1286.5" fill="none" stroke="#dedee2" stroke-width="3.1" stroke-linejoin="miter"/>
<path d="M2059.0 1333.1 L2063.8 1338.7 L2077.4 1320.1" fill="none" stroke="#dedee2" stroke-width="3.1" stroke-linejoin="miter"/>
<path d="M3196 701.4 L3213.4 718.8 M3213.4 701.4 L3196 718.8" stroke="#b4b4b8" stroke-width="1.7"/>
<line x1="2372.4" y1="755" x2="2372.4" y2="1590" stroke="#c6c6cb" stroke-width="1.4"/>
<rect x="2327" y="995.5" width="879" height="524.5" fill="url(#cg)"/>
<line x1="2372.4" y1="995.5" x2="2372.4" y2="1008" stroke="#c6c6cb" stroke-width="1.4"/>
<clipPath id="bc0"><polygon points="2331.0,1520.0 2333.2,1066.8 2334.0,1012.8 2334.8,1008.8 2335.4,1024.8 2336.0,1008.2 2337.2,1018.8 2338.0,1007.2 2340.6,1005.4 2345.6,1004.8 2353.6,1005.8 2363.6,1006.8 2419.0,1006.8 2420.6,1007.3 2421.2,1020.8 2422.0,1007.3 2424.4,1006.2 2425.0,1030.8 2425.8,1006.8 2427.0,1014.8 2427.6,1076.8 2431.0,1520.0"/></clipPath>
<rect x="2330.0" y="1002.8" width="102.0" height="98.40000000000009" fill="#ed1c24" clip-path="url(#bc0)"/>
<rect x="2330.0" y="1101.2" width="102.0" height="418.79999999999995" fill="#22b14c" clip-path="url(#bc0)"/>
<clipPath id="bc1"><polygon points="2441.1,1520.0 2443.2,1066.8 2444.0,1012.8 2444.8,1008.8 2445.4,1024.8 2446.0,1008.2 2447.2,1018.8 2448.0,1007.2 2450.6,1005.4 2455.6,1004.8 2463.6,1005.8 2473.6,1006.8 2529.0,1006.8 2530.6,1007.3 2531.2,1020.8 2532.0,1007.3 2534.4,1006.2 2535.0,1030.8 2535.8,1006.8 2537.0,1014.8 2537.6,1076.8 2541.1,1520.0"/></clipPath>
<rect x="2440.1" y="1002.8" width="102.0" height="98.40000000000009" fill="#ed1c24" clip-path="url(#bc1)"/>
<rect x="2440.1" y="1101.2" width="102.0" height="418.79999999999995" fill="#22b14c" clip-path="url(#bc1)"/>
<clipPath id="bc2"><polygon points="2551.2,1520.0 2553.2,1066.8 2554.0,1012.8 2554.8,1008.8 2555.4,1024.8 2556.0,1008.2 2557.2,1018.8 2558.0,1007.2 2560.6,1005.4 2565.6,1004.8 2573.6,1005.8 2583.6,1006.8 2639.0,1006.8 2640.6,1007.3 2641.2,1020.8 2642.0,1007.3 2644.4,1006.2 2645.0,1030.8 2645.8,1006.8 2647.0,1014.8 2647.6,1076.8 2651.2,1520.0"/></clipPath>
<rect x="2550.2" y="1002.8" width="102.0" height="98.40000000000009" fill="#ed1c24" clip-path="url(#bc2)"/>
<rect x="2550.2" y="1101.2" width="102.0" height="418.79999999999995" fill="#22b14c" clip-path="url(#bc2)"/>
<clipPath id="bc3"><polygon points="2661.3,1520.0 2663.2,1066.8 2664.0,1012.8 2664.8,1008.8 2665.4,1024.8 2666.0,1008.2 2667.2,1018.8 2668.0,1007.2 2670.6,1005.4 2675.6,1004.8 2683.6,1005.8 2693.6,1006.8 2749.0,1006.8 2750.6,1007.3 2751.2,1020.8 2752.0,1007.3 2754.4,1006.2 2755.0,1030.8 2755.8,1006.8 2757.0,1014.8 2757.6,1076.8 2761.3,1520.0"/></clipPath>
<rect x="2660.3" y="1002.8" width="102.0" height="98.40000000000009" fill="#ed1c24" clip-path="url(#bc3)"/>
<rect x="2660.3" y="1101.2" width="102.0" height="418.79999999999995" fill="#22b14c" clip-path="url(#bc3)"/>
<clipPath id="bc4"><polygon points="2771.4,1520.0 2773.2,1058.0 2774.0,1004.0 2774.8,1000.0 2775.4,1016.0 2776.0,999.4 2777.2,1010.0 2778.0,998.4 2780.6,996.6 2785.6,996.0 2793.6,997.0 2803.6,998.0 2859.0,998.0 2860.6,998.5 2861.2,1012.0 2862.0,998.5 2864.4,997.4 2865.0,1022.0 2865.8,998.0 2867.0,1006.0 2867.6,1068.0 2871.4,1520.0"/></clipPath>
<rect x="2770.4" y="994" width="102.0" height="107.20000000000005" fill="#ed1c24" clip-path="url(#bc4)"/>
<rect x="2770.4" y="1101.2" width="102.0" height="418.79999999999995" fill="#22b14c" clip-path="url(#bc4)"/>
<clipPath id="bc5"><polygon points="2881.5,1520.0 2883.2,1066.4 2884.0,1012.4 2884.8,1008.4 2885.4,1024.4 2886.0,1007.8 2887.2,1018.4 2888.0,1006.8 2890.6,1005.0 2895.6,1004.4 2903.6,1005.4 2913.6,1006.4 2969.0,1006.4 2970.6,1006.9 2971.2,1020.4 2972.0,1006.9 2974.4,1005.8 2975.0,1030.4 2975.8,1006.4 2977.0,1014.4 2977.6,1076.4 2981.5,1520.0"/></clipPath>
<rect x="2880.5" y="1002.4" width="102.0" height="98.80000000000007" fill="#ed1c24" clip-path="url(#bc5)"/>
<rect x="2880.5" y="1101.2" width="102.0" height="418.79999999999995" fill="#22b14c" clip-path="url(#bc5)"/>
<clipPath id="bc6"><polygon points="2991.6,1520.0 2993.2,1171.4 2994.0,1117.4 2994.8,1113.4 2995.4,1129.4 2996.0,1112.8 2997.2,1123.4 2998.0,1111.8 3000.6,1110.0 3005.6,1109.4 3013.6,1110.4 3023.6,1111.4 3079.0,1111.4 3080.6,1111.9 3081.2,1125.4 3082.0,1111.9 3084.4,1110.8 3085.0,1135.4 3085.8,1111.4 3087.0,1119.4 3087.6,1181.4 3091.6,1520.0"/></clipPath>
<rect x="2990.6" y="1107.4" width="102.0" height="412.5999999999999" fill="#22b14c" clip-path="url(#bc6)"/>
<rect x="2320" y="1099.9" width="887" height="2.7" fill="#c81f2a"/>
<path d="M3184 1520.00 H3206 M3195 1513.71 H3206 M3195 1507.43 H3206 M3195 1501.14 H3206 M3195 1494.86 H3206 M3184 1488.57 H3206 M3195 1482.28 H3206 M3195 1476.00 H3206 M3195 1469.71 H3206 M3195 1463.43 H3206 M3184 1457.14 H3206 M3195 1450.85 H3206 M3195 1444.57 H3206 M3195 1438.28 H3206 M3195 1432.00 H3206 M3184 1425.71 H3206 M3195 1419.42 H3206 M3195 1413.14 H3206 M3195 1406.85 H3206 M3195 1400.57 H3206 M3184 1394.28 H3206 M3195 1387.99 H3206 M3195 1381.71 H3206 M3195 1375.42 H3206 M3195 1369.14 H3206 M3184 1362.85 H3206 M3195 1356.56 H3206 M3195 1350.28 H3206 M3195 1343.99 H3206 M3195 1337.71 H3206 M3184 1331.42 H3206 M3195 1325.13 H3206 M3195 1318.85 H3206 M3195 1312.56 H3206 M3195 1306.28 H3206 M3184 1299.99 H3206 M3195 1293.70 H3206 M3195 1287.42 H3206 M3195 1281.13 H3206 M3195 1274.85 H3206 M3184 1268.56 H3206 M3195 1262.27 H3206 M3195 1255.99 H3206 M3195 1249.70 H3206 M3195 1243.42 H3206 M3184 1237.13 H3206 M3195 1230.84 H3206 M3195 1224.56 H3206 M3195 1218.27 H3206 M3195 1211.99 H3206 M3184 1205.70 H3206 M3195 1199.41 H3206 M3195 1193.13 H3206 M3195 1186.84 H3206 M3195 1180.56 H3206 M3184 1174.27 H3206 M3195 1167.98 H3206 M3195 1161.70 H3206 M3195 1155.41 H3206 M3195 1149.13 H3206 M3184 1142.84 H3206 M3195 1136.55 H3206 M3195 1130.27 H3206 M3195 1123.98 H3206 M3195 1117.70 H3206 M3184 1111.41 H3206 M3195 1105.12 H3206 M3195 1098.84 H3206 M3195 1092.55 H3206 M3195 1086.27 H3206 M3184 1079.98 H3206 M3195 1073.69 H3206 M3195 1067.41 H3206 M3195 1061.12 H3206 M3195 1054.84 H3206 M3184 1048.55 H3206 M3195 1042.26 H3206 M3195 1035.98 H3206 M3195 1029.69 H3206 M3195 1023.41 H3206 M3184 1017.12 H3206 M3195 1010.83 H3206 M3195 1004.55 H3206 M3195 998.26 H3206" stroke="#e4e4e8" stroke-width="1.05"/>
<path d="M3184 995.9 H3206" stroke="#ed1c24" stroke-width="1.4"/><path d="M3184 1519.8 H3206" stroke="#2424e0" stroke-width="1.4"/>
<text x="3193.4" y="1515.8" text-anchor="end" font-size="18" fill="#ececf0" font-family="Liberation Sans">0</text>
<text x="3193.4" y="1484.4" text-anchor="end" font-size="18" fill="#ececf0" font-family="Liberation Sans">0.5</text>
<text x="3193.4" y="1452.9" text-anchor="end" font-size="18" fill="#ececf0" font-family="Liberation Sans">1</text>
<text x="3193.4" y="1421.5" text-anchor="end" font-size="18" fill="#ececf0" font-family="Liberation Sans">1.5</text>
<text x="3193.4" y="1390.1" text-anchor="end" font-size="18" fill="#ececf0" font-family="Liberation Sans">2</text>
<text x="3193.4" y="1358.6" text-anchor="end" font-size="18" fill="#ececf0" font-family="Liberation Sans">2.5</text>
<text x="3193.4" y="1327.2" text-anchor="end" font-size="18" fill="#ececf0" font-family="Liberation Sans">3</text>
<text x="3193.4" y="1295.8" text-anchor="end" font-size="18" fill="#ececf0" font-family="Liberation Sans">3.5</text>
<text x="3193.4" y="1264.4" text-anchor="end" font-size="18" fill="#ececf0" font-family="Liberation Sans">4</text>
<text x="3193.4" y="1232.9" text-anchor="end" font-size="18" fill="#ececf0" font-family="Liberation Sans">4.5</text>
<text x="3193.4" y="1201.5" text-anchor="end" font-size="18" fill="#ececf0" font-family="Liberation Sans">5</text>
<text x="3193.4" y="1170.1" text-anchor="end" font-size="18" fill="#ececf0" font-family="Liberation Sans">5.5</text>
<text x="3193.4" y="1138.6" text-anchor="end" font-size="18" fill="#ececf0" font-family="Liberation Sans">6</text>
<text x="3193.4" y="1107.2" text-anchor="end" font-size="18" fill="#ececf0" font-family="Liberation Sans">6.5</text>
<text x="3193.4" y="1075.8" text-anchor="end" font-size="18" fill="#ececf0" font-family="Liberation Sans">7</text>
<text x="3193.4" y="1044.3" text-anchor="end" font-size="18" fill="#ececf0" font-family="Liberation Sans">7.5</text>
<text x="3193.6" y="991" text-anchor="end" font-size="18" fill="#ececf0" font-family="Liberation Sans">8.34</text>
<text x="3162.4" y="990.6" text-anchor="end" font-size="18" fill="#ececf0" font-family="Liberation Sans">(cm³/min)</text>
<text x="2330" y="993" font-size="18" fill="#22b14c" font-family="Liberation Sans">Material removal rate</text>
<path d="M2023.1 1593 V1600.6 M2047.8 1593 V1600.6 M2072.5 1593 V1611.4 M2097.2 1593 V1600.6 M2121.9 1593 V1600.6 M2146.6 1593 V1600.6 M2171.3 1593 V1600.6 M2196.0 1593 V1600.6 M2220.7 1593 V1600.6 M2245.4 1593 V1600.6 M2270.1 1593 V1600.6 M2294.8 1593 V1600.6 M2319.5 1593 V1611.4" stroke="#33363f" stroke-width="1.2"/>
<text x="2321.8" y="1609.6" font-size="18" fill="#3a3d48" font-family="Liberation Sans">0</text>
<path d="M2344.2 1590 V1600.6 M2368.9 1590 V1600.6 M2393.6 1590 V1600.6 M2418.3 1590 V1600.6 M2443.0 1590 V1600.6 M2467.7 1590 V1600.6 M2492.4 1590 V1600.6 M2517.1 1590 V1600.6 M2541.8 1590 V1600.6 M2566.5 1590 V1611.4 M2591.2 1590 V1600.6 M2615.9 1590 V1600.6 M2640.6 1590 V1600.6 M2665.3 1590 V1600.6 M2690.0 1590 V1600.6 M2714.7 1590 V1600.6 M2739.4 1590 V1600.6 M2764.1 1590 V1600.6 M2788.8 1590 V1600.6 M2813.5 1590 V1611.4 M2838.2 1590 V1600.6 M2862.9 1590 V1600.6 M2887.6 1590 V1600.6 M2912.3 1590 V1600.6 M2937.0 1590 V1600.6 M2961.7 1590 V1600.6 M2986.4 1590 V1600.6 M3011.1 1590 V1600.6 M3035.8 1590 V1600.6 M3060.5 1590 V1611.4 M3085.2 1590 V1600.6 M3109.9 1590 V1600.6 M3134.6 1590 V1600.6 M3159.3 1590 V1600.6 M3184.0 1590 V1600.6 M3208.7 1590 V1600.6" stroke="#e4e4e8" stroke-width="1.2"/>
<text x="2568.9" y="1609.6" font-size="18" fill="#ececf0" font-family="Liberation Sans">10m</text>
<text x="2815.9" y="1609.6" font-size="18" fill="#ececf0" font-family="Liberation Sans">20m</text>
<text x="3062.9" y="1609.6" font-size="18" fill="#ececf0" font-family="Liberation Sans">30m</text>
<clipPath id="zc"><rect x="2327" y="1590" width="20" height="24"/></clipPath><text x="2321.8" y="1609.6" font-size="18" fill="#ececf0" font-family="Liberation Sans" clip-path="url(#zc)">0</text>
</svg>
</body></html>
